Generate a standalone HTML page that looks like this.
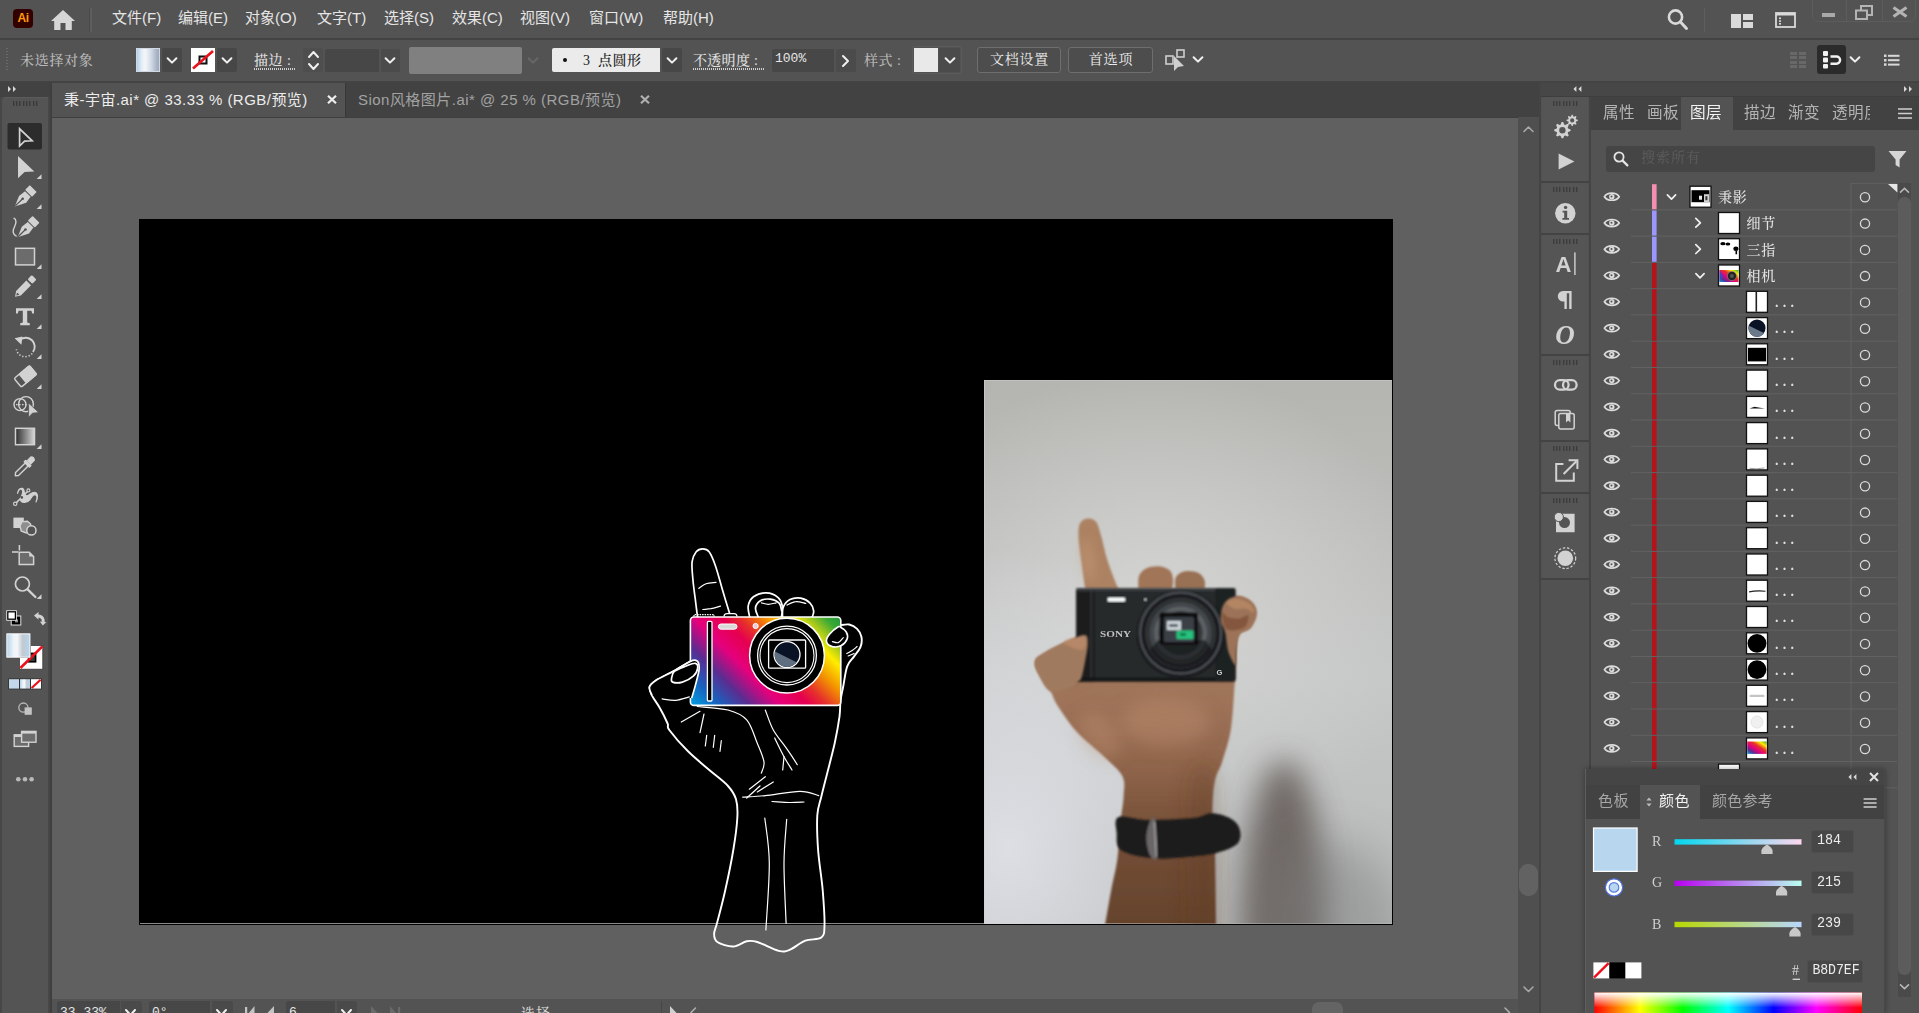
<!DOCTYPE html>
<html lang="zh-CN">
<head>
<meta charset="utf-8">
<title>Adobe Illustrator</title>
<style>
*{box-sizing:border-box;margin:0;padding:0}
html,body{width:1919px;height:1013px;overflow:hidden;background:#535353}
body{position:relative;font-family:"Liberation Sans","Noto Sans CJK SC",sans-serif;color:#dcdcdc;font-size:15px}
.abs{position:absolute}
.sans{font-family:"Liberation Sans","Noto Sans CJK SC",sans-serif}
.serif{font-family:"Liberation Serif","Noto Serif CJK SC",serif}
svg{display:block;overflow:visible}
/* ---------- menu bar ---------- */
#menubar{left:0;top:0;width:1919px;height:38px;background:#535353}
.mi{position:absolute;top:7px;height:22px;line-height:22px;font-size:15px;color:#e6e6e6;white-space:nowrap}
#line1{left:0;top:38px;width:1919px;height:2px;background:#434343}
/* ---------- control bar ---------- */
#ctrlbar{left:0;top:40px;width:1919px;height:41px;background:#535353}
#line2{left:0;top:81px;width:1919px;height:2px;background:#434343}
.ctl{position:absolute;font-weight:500;font-size:14px;color:#d2d2d2;white-space:nowrap;line-height:20px;top:51px}
.dd{position:absolute;background:#474747;border-radius:2px}
.chev{position:absolute}
/* ---------- tab bar ---------- */
#tabbar{left:52px;top:83px;width:1487px;height:34px;background:#424242}
#tab1{left:52px;top:83px;width:293px;height:34px;background:#535353}
.tabtxt{position:absolute;top:89px;font-size:15px;line-height:22px;white-space:nowrap;letter-spacing:0.47px}
/* ---------- tools ---------- */
#toolstrip{left:0;top:83px;width:50px;height:14px;background:#424242}
#tools{left:2px;top:97px;width:46px;height:916px;background:#545454;border-radius:4px 0 0 0;border-top:1px solid #5b5b5b}
#toolsep{left:50px;top:83px;width:2px;height:930px;background:#3f3f3f}
.tool{position:absolute;left:8px;width:34px;height:27px}
/* ---------- canvas ---------- */
#canvas{left:52px;top:118px;width:1468px;height:881px;border-top:0;background:#606060;overflow:hidden}
#artboard{left:139px;top:219px;width:1254px;height:706px;background:#000}
</style>
</head>
<body>
<!-- ================= MENU BAR ================= -->
<div id="menubar" class="abs"></div>
<div id="line1" class="abs"></div>
<div id="ctrlbar" class="abs"></div>
<div id="line2" class="abs"></div>
<div id="tabbar" class="abs"></div>
<div id="tab1" class="abs"></div>
<div class="abs" style="left:0;top:83px;width:50px;height:930px;background:#474747"></div>
<div id="toolstrip" class="abs"></div>
<div id="tools" class="abs"></div>
<div id="toolsep" class="abs"></div>
<div id="canvas" class="abs"></div>
<div class="abs" style="left:52px;top:117px;width:1487px;height:1px;background:#3e3e3e"></div>
<div id="artboard" class="abs"></div>
<!-- Ai logo -->
<div class="abs" style="left:13px;top:9px;width:20px;height:19px;background:#330000;border-radius:4px"></div>
<div class="abs sans" style="left:13px;top:9px;width:20px;height:19px;line-height:19px;text-align:center;font-size:12px;font-weight:bold;color:#ff9a00;letter-spacing:-0.5px">Ai</div>
<!-- home -->
<svg class="abs" style="left:51px;top:10px" width="24" height="20" viewBox="0 0 24 20"><path d="M12 0 L0 11 L3.2 11 L3.2 20 L9.5 20 L9.5 13 L14.5 13 L14.5 20 L20.8 20 L20.8 11 L24 11 Z" fill="#d6d6d6"/></svg>
<div class="abs" style="left:90px;top:8px;width:2px;height:24px;background:#5d5d5d"></div>
<div class="abs" style="left:89px;top:8px;width:1px;height:24px;background:#4a4a4a"></div>
<div id="menuitems">
<span class="mi abs" style="left:112px">文件(F)</span>
<span class="mi abs" style="left:178px">编辑(E)</span>
<span class="mi abs" style="left:245px">对象(O)</span>
<span class="mi abs" style="left:317px">文字(T)</span>
<span class="mi abs" style="left:384px">选择(S)</span>
<span class="mi abs" style="left:452px">效果(C)</span>
<span class="mi abs" style="left:520px">视图(V)</span>
<span class="mi abs" style="left:589px">窗口(W)</span>
<span class="mi abs" style="left:663px">帮助(H)</span>
</div>
<svg class="abs" style="left:1664px;top:6px" width="28" height="28" viewBox="0 0 28 28"><circle cx="11.5" cy="11" r="6.6" fill="none" stroke="#d9d9d9" stroke-width="2.6"/><line x1="16.5" y1="16" x2="22.5" y2="22.5" stroke="#d9d9d9" stroke-width="3" stroke-linecap="round"/></svg>
<div class="abs" style="left:1704px;top:8px;width:1px;height:24px;background:#5e5e5e"></div>
<svg class="abs" style="left:1731px;top:14px" width="22" height="14" viewBox="0 0 22 14"><g fill="#d9d9d9"><rect x="0" y="0" width="10" height="14"/><rect x="12" y="0" width="10" height="6"/><rect x="12" y="8" width="10" height="6"/></g></svg>
<svg class="abs" style="left:1775px;top:12px" width="21" height="16" viewBox="0 0 21 16"><rect x="1" y="1" width="19" height="14" fill="none" stroke="#d9d9d9" stroke-width="1.8"/><rect x="1" y="1" width="19" height="2.5" fill="#d9d9d9"/><g fill="#d9d9d9"><rect x="4" y="5.5" width="2" height="1.6"/><rect x="4" y="8.3" width="2" height="1.6"/><rect x="4" y="11" width="2" height="1.6"/></g></svg>
<div class="abs" style="left:1812px;top:-6px;width:104px;height:28px;border:1px solid #5c5c5c;border-radius:6px"></div>
<div class="abs" style="left:1846px;top:0;width:1px;height:21px;background:#5c5c5c"></div>
<div class="abs" style="left:1882px;top:0;width:1px;height:21px;background:#5c5c5c"></div>
<div class="abs" style="left:1822px;top:13px;width:13px;height:4px;background:#a8a8a8"></div>
<svg class="abs" style="left:1855px;top:5px" width="18" height="15" viewBox="0 0 18 15"><rect x="6" y="1" width="11" height="9" fill="none" stroke="#b4b4b4" stroke-width="2"/><rect x="1" y="5.5" width="11" height="8.5" fill="#535353" stroke="#b4b4b4" stroke-width="2"/></svg>
<svg class="abs" style="left:1892px;top:7px" width="16" height="10" viewBox="0 0 16 10"><path d="M1.5 0.5 L14.5 9.5 M14.5 0.5 L1.5 9.5" stroke="#b4b4b4" stroke-width="3"/></svg>
<!--MENU-->
<div class="abs" style="left:6px;top:48px;width:2px;height:24px;background:repeating-linear-gradient(to bottom,#6a6a6a 0 1px,transparent 1px 3px)"></div>
<div class="ctl serif" style="left:20px;color:#b9b9b9;letter-spacing:0.7px">未选择对象</div>
<div class="abs" style="left:136px;top:48px;width:24px;height:24px;background:linear-gradient(90deg,#b4d2ea 0%,#e4eef7 22%,#f4f7fa 38%,#d5dde8 62%,#aab6c8 88%,#9eaabd 100%);border:1px solid #cfd8e0"></div>
<div class="dd" style="left:162px;top:48px;width:20px;height:24px"></div>
<svg class="abs" style="left:166.0px;top:57.0px" width="12" height="7" viewBox="-1 -1 12 7"><path d="M0.6 0.2 L5 4.6 L9.4 0.2" fill="none" stroke="#f0f0f0" stroke-width="2" stroke-linecap="round" stroke-linejoin="round"/></svg>
<div class="abs" style="left:191px;top:48px;width:24px;height:24px;background:#fff"></div>
<svg class="abs" style="left:191px;top:48px" width="24" height="24" viewBox="0 0 24 24"><rect x="8.5" y="8.5" width="7" height="7" fill="none" stroke="#111" stroke-width="2"/><line x1="2" y1="20.5" x2="22" y2="3" stroke="#e8111c" stroke-width="2.6"/></svg>
<div class="dd" style="left:217px;top:48px;width:20px;height:24px"></div>
<svg class="abs" style="left:221.0px;top:57.0px" width="12" height="7" viewBox="-1 -1 12 7"><path d="M0.6 0.2 L5 4.6 L9.4 0.2" fill="none" stroke="#f0f0f0" stroke-width="2" stroke-linecap="round" stroke-linejoin="round"/></svg>
<div class="ctl serif" style="left:254px;color:#e0e0e0;letter-spacing:0.5px">描边 :</div>
<div class="abs" style="left:254px;top:68px;width:42px;height:2px;background:repeating-linear-gradient(90deg,#d0d0d0 0 1px,transparent 1px 2px)"></div>
<div class="dd" style="left:303px;top:48px;width:20px;height:24px;background:#4e4e4e"></div>
<svg class="abs" style="left:307.5px;top:51.0px" width="11" height="7" viewBox="-1 -1 11 7"><path d="M0 5 L4.5 0 L9 5" fill="none" stroke="#f0f0f0" stroke-width="2" stroke-linecap="round" stroke-linejoin="round"/></svg>
<svg class="abs" style="left:307.5px;top:62.5px" width="11" height="7" viewBox="-1 -1 11 7"><path d="M0 0 L4.5 5 L9 0" fill="none" stroke="#f0f0f0" stroke-width="2" stroke-linecap="round" stroke-linejoin="round"/></svg>
<div class="dd" style="left:325px;top:49px;width:54px;height:23px;background:#474747;border-radius:2px 0 0 2px"></div>
<div class="dd" style="left:381px;top:49px;width:19px;height:23px;background:#4b4b4b"></div>
<svg class="abs" style="left:384.0px;top:57.0px" width="12" height="7" viewBox="-1 -1 12 7"><path d="M0.6 0.2 L5 4.6 L9.4 0.2" fill="none" stroke="#f0f0f0" stroke-width="2" stroke-linecap="round" stroke-linejoin="round"/></svg>
<div class="abs" style="left:409px;top:47px;width:113px;height:27px;background:#808080;border-radius:2px"></div>
<svg class="abs" style="left:527.0px;top:57.0px" width="12" height="7" viewBox="-1 -1 12 7"><path d="M0.6 0.2 L5 4.6 L9.4 0.2" fill="none" stroke="#676767" stroke-width="2" stroke-linecap="round" stroke-linejoin="round"/></svg>
<div class="abs" style="left:552px;top:48px;width:108px;height:24px;background:#ebebeb;border-radius:2px 0 0 2px"></div>
<div class="abs" style="left:563px;top:58px;width:4px;height:4px;border-radius:50%;background:#111"></div>
<div class="ctl serif" style="left:583px;color:#1e1e1e">3</div>
<div class="ctl serif" style="left:598px;color:#1e1e1e;letter-spacing:0.5px">点圆形</div>
<div class="dd" style="left:662px;top:48px;width:20px;height:24px"></div>
<svg class="abs" style="left:666.0px;top:57.0px" width="12" height="7" viewBox="-1 -1 12 7"><path d="M0.6 0.2 L5 4.6 L9.4 0.2" fill="none" stroke="#f0f0f0" stroke-width="2" stroke-linecap="round" stroke-linejoin="round"/></svg>
<div class="ctl serif" style="left:693px;color:#e0e0e0;letter-spacing:0.3px">不透明度 :</div>
<div class="abs" style="left:693px;top:68px;width:71px;height:2px;background:repeating-linear-gradient(90deg,#d0d0d0 0 1px,transparent 1px 2px)"></div>
<div class="dd" style="left:772px;top:49px;width:62px;height:23px;border-radius:2px 0 0 2px"></div>
<div class="abs" style="left:775px;top:50px;font-family:'Liberation Mono',monospace;font-size:13px;line-height:18px;color:#e8e8e8">100%</div>
<div class="dd" style="left:836px;top:49px;width:20px;height:23px;background:#4b4b4b"></div>
<svg class="abs" style="left:842.0px;top:54.5px" width="7" height="12" viewBox="-1 -1 7 12"><path d="M0 0 L5 5.0 L0 10" fill="none" stroke="#f0f0f0" stroke-width="2" stroke-linecap="round" stroke-linejoin="round"/></svg>
<div class="ctl serif" style="left:864px;color:#b9b9b9;letter-spacing:0.5px">样式 :</div>
<div class="abs" style="left:912px;top:46px;width:50px;height:28px;border:1px solid #5b5b5b;border-radius:2px"></div>
<div class="abs" style="left:914px;top:48px;width:24px;height:24px;background:#e9e9e9"></div>
<div class="dd" style="left:939px;top:48px;width:21px;height:24px;background:#4b4b4b"></div>
<svg class="abs" style="left:943.5px;top:57.0px" width="12" height="7" viewBox="-1 -1 12 7"><path d="M0.6 0.2 L5 4.6 L9.4 0.2" fill="none" stroke="#f0f0f0" stroke-width="2" stroke-linecap="round" stroke-linejoin="round"/></svg>
<div class="abs serif" style="left:977px;top:47px;width:84px;height:26px;border:1px solid #6e6e6e;border-radius:3px;background:#4d4d4d;color:#ececec;font-size:14px;line-height:24px;text-align:center;letter-spacing:0.8px;padding-left:1px">文档设置</div>
<div class="abs serif" style="left:1068px;top:47px;width:85px;height:26px;border:1px solid #6e6e6e;border-radius:3px;background:#4d4d4d;color:#ececec;font-size:14px;line-height:24px;text-align:center;letter-spacing:0.8px;padding-left:1px">首选项</div>
<svg class="abs" style="left:1165px;top:49px" width="22" height="24" viewBox="0 0 22 24"><rect x="1" y="7" width="7" height="8" fill="none" stroke="#cfcfcf" stroke-width="1.6"/><rect x="12" y="1" width="7" height="7" fill="none" stroke="#cfcfcf" stroke-width="1.6"/><path d="M9 7 L9 22 L13 18 L19 17 Z" fill="#cfcfcf"/></svg>
<svg class="abs" style="left:1192.0px;top:56.0px" width="12" height="7" viewBox="-1 -1 12 7"><path d="M0.6 0.2 L5 4.6 L9.4 0.2" fill="none" stroke="#f0f0f0" stroke-width="2" stroke-linecap="round" stroke-linejoin="round"/></svg>
<svg class="abs" style="left:1790px;top:52px" width="16" height="16" viewBox="0 0 16 16"><g fill="#686868"><rect x="0" y="0" width="7" height="3"/><rect x="0" y="4" width="7" height="3"/><rect x="9" y="0" width="7" height="3"/><rect x="9" y="4" width="7" height="3"/><rect x="0" y="9" width="7" height="3"/><rect x="0" y="13" width="7" height="3"/><rect x="9" y="9" width="7" height="3"/><rect x="9" y="13" width="7" height="3"/></g></svg>
<div class="abs" style="left:1817px;top:45px;width:29px;height:29px;background:#2b2b2b;border-radius:3px"></div>
<svg class="abs" style="left:1817px;top:45px" width="29" height="29" viewBox="0 0 29 29"><g fill="#f2f2f2"><rect x="6" y="6" width="5" height="5" rx="1"/><rect x="6" y="12.5" width="5" height="5" rx="1"/><rect x="6" y="19" width="5" height="4.5" rx="1"/></g><path d="M13.5 11.5 H19.5 A3.6 3.6 0 0 1 19.5 18.7 H13.5" fill="none" stroke="#f2f2f2" stroke-width="2.4"/></svg>
<svg class="abs" style="left:1848.5px;top:56.0px" width="12" height="7" viewBox="-1 -1 12 7"><path d="M0.6 0.2 L5 4.6 L9.4 0.2" fill="none" stroke="#f0f0f0" stroke-width="2" stroke-linecap="round" stroke-linejoin="round"/></svg>
<svg class="abs" style="left:1884px;top:54px" width="16" height="12" viewBox="0 0 16 12"><g fill="#d8d8d8"><rect x="0" y="0.5" width="2.5" height="2.5"/><rect x="4" y="0.8" width="11.5" height="2"/><rect x="0" y="5" width="2.5" height="2.5"/><rect x="4" y="5.2" width="11.5" height="2"/><rect x="0" y="9.3" width="2.5" height="2.5"/><rect x="4" y="9.6" width="11.5" height="2"/></g></svg>
<!--CTRL-->
<div class="tabtxt sans" style="left:64px;color:#ededed">秉-宇宙.ai* @ 33.33 % (RGB/预览)</div>
<svg class="abs" style="left:327px;top:95px" width="10" height="9" viewBox="0 0 10 9"><path d="M1 0.8 L9 8.2 M9 0.8 L1 8.2" stroke="#f0f0f0" stroke-width="2.2"/></svg>
<div class="abs" style="left:345px;top:83px;width:1px;height:34px;background:#383838"></div>
<div class="tabtxt sans" style="left:358px;color:#a2a2a2">Sion风格图片.ai* @ 25 % (RGB/预览)</div>
<svg class="abs" style="left:640px;top:95px" width="10" height="9" viewBox="0 0 10 9"><path d="M1 0.8 L9 8.2 M9 0.8 L1 8.2" stroke="#b0b0b0" stroke-width="2.2"/></svg>
<!--TABS-->
<svg class="abs" style="left:0;top:0" width="52" height="1013" viewBox="0 0 52 1013">
<path d="M8 86 L11 89 L8 92 Z M13 86 L16 89 L13 92 Z" fill="#d8d8d8"/>
<g fill="#3a3a3a"><rect x="13" y="101" width="1.4" height="5"/><rect x="16" y="101" width="1.4" height="5"/><rect x="19" y="101" width="1.4" height="5"/><rect x="23" y="101" width="1.4" height="5"/><rect x="26" y="101" width="1.4" height="5"/><rect x="29" y="101" width="1.4" height="5"/><rect x="33" y="101" width="1.4" height="5"/><rect x="36" y="101" width="1.4" height="5"/></g>
<rect x="7.5" y="123" width="34.5" height="26.5" rx="2" fill="#2c2c2c"/>
<path d="M19.6 128.8 L19.6 146 L24.6 141.2 L32.2 140.8 Z" fill="none" stroke="#d2d2d2" stroke-width="1.7" stroke-linejoin="miter"/>
<path d="M18 156 L18 178.3 L24.6 172 L34.3 171.6 Z" fill="#d2d2d2"/>
<path d="M41.5 174.2 L41.5 179.0 L36.7 179.0 Z" fill="#d2d2d2"/><g transform="translate(14.8,206.4)"><path d="M0 0 L4.2 -10.5 L10.2 -15.2 L15.8 -9.6 L11.4 -3.6 Z" fill="#d2d2d2"/><path d="M0.5 -0.5 L7.6 -7.4" stroke="#535353" stroke-width="1.2"/><circle cx="7.9" cy="-7.7" r="1.3" fill="#535353"/><path d="M11.4 -16.6 L15 -20.2 L20.8 -14.4 L17.2 -10.8 Z" fill="#d2d2d2" stroke="#d2d2d2" stroke-width="1.6" stroke-linejoin="round"/></g><path d="M41.5 204.2 L41.5 209.0 L36.7 209.0 Z" fill="#d2d2d2"/>
<g transform="translate(17.6,237.2)"><path d="M0 0 L4.2 -10.5 L10.2 -15.2 L15.8 -9.6 L11.4 -3.6 Z" fill="#d2d2d2"/><path d="M0.5 -0.5 L7.6 -7.4" stroke="#535353" stroke-width="1.2"/><circle cx="7.9" cy="-7.7" r="1.3" fill="#535353"/><path d="M11.4 -16.6 L15 -20.2 L20.8 -14.4 L17.2 -10.8 Z" fill="#d2d2d2" stroke="#d2d2d2" stroke-width="1.6" stroke-linejoin="round"/></g><path d="M13.6 217.8 C17 219.5 16.2 223.5 14.4 227 C12.6 230.6 12.4 234.6 16.6 236.4" fill="none" stroke="#d2d2d2" stroke-width="1.4"/>
<rect x="15.5" y="248.3" width="19" height="16.6" fill="#6c6c6c" stroke="#d2d2d2" stroke-width="1.5"/><path d="M41.5 264.2 L41.5 269.0 L36.7 269.0 Z" fill="#d2d2d2"/>
<g transform="translate(15,296.8) rotate(-45.5)"><path d="M0 0 L5 -3.3 L19.5 -3.3 L19.5 3.3 L5 3.3 Z" fill="#d2d2d2"/><path d="M1.8 0 L4.6 -1.6 L4.6 1.6 Z" fill="#535353"/><rect x="21.3" y="-3.3" width="6" height="6.6" rx="1.2" fill="#d2d2d2"/></g><path d="M41.5 294.2 L41.5 299.0 L36.7 299.0 Z" fill="#d2d2d2"/>
<path d="M16 308.2 H34 V313.6 H32.2 L31.4 310.8 H27.2 V322.6 L29.8 323.2 V325.2 H20.2 V323.2 L22.8 322.6 V310.8 H18.6 L17.8 313.6 H16 Z" fill="#d2d2d2"/><path d="M41.5 324.2 L41.5 329.0 L36.7 329.0 Z" fill="#d2d2d2"/>
<path d="M20.2 339.6 A9 9 0 0 1 33 352" fill="none" stroke="#d2d2d2" stroke-width="1.9"/><path d="M14.6 338.2 L22.4 336.6 L21.4 344.8 Z" fill="#d2d2d2"/><path d="M32.2 353.4 A9 9 0 0 1 16.4 349.4" fill="none" stroke="#d2d2d2" stroke-width="1.6" stroke-dasharray="1.3 1.9"/><path d="M41.5 354.2 L41.5 359.0 L36.7 359.0 Z" fill="#d2d2d2"/>
<g transform="translate(25.4,376.4) rotate(-40)"><rect x="-10" y="-5.6" width="20" height="11.2" rx="1.5" fill="none" stroke="#d2d2d2" stroke-width="1.4"/><rect x="-4" y="-6.3" width="14.7" height="12.6" rx="1.5" fill="#d2d2d2"/></g><path d="M41.5 384.2 L41.5 389.0 L36.7 389.0 Z" fill="#d2d2d2"/>
<circle cx="20" cy="404.6" r="6" fill="none" stroke="#d2d2d2" stroke-width="1.4"/><ellipse cx="26" cy="404.2" rx="7.4" ry="7.6" fill="none" stroke="#d2d2d2" stroke-width="1.4"/><path d="M16 404.6 H29" stroke="#d2d2d2" stroke-width="1.2" stroke-dasharray="1.6 1.4"/><path d="M28.6 403 L28.6 417.4 L32.4 413.2 L38.8 412.6 Z" fill="#d2d2d2" stroke="#535353" stroke-width="0.8"/>
<defs><linearGradient id="gt" x1="0" x2="1"><stop offset="0" stop-color="#2e2e2e"/><stop offset="1" stop-color="#d6d6d6"/></linearGradient></defs><rect x="15.5" y="428.3" width="19" height="16.4" fill="url(#gt)" stroke="#d2d2d2" stroke-width="1.5"/><path d="M41.5 444.2 L41.5 449.0 L36.7 449.0 Z" fill="#d2d2d2"/>
<g transform="translate(14.6,476.4) rotate(-44.5)"><path d="M1 0 L3.4 -2.1 L17 -2.1 L17 2.1 L3.4 2.1 Z" fill="none" stroke="#d2d2d2" stroke-width="1.4" stroke-linejoin="round"/><rect x="16.4" y="-4.4" width="3.4" height="8.8" rx="0.8" fill="#d2d2d2"/><path d="M19.8 -3 L25.6 -3 Q28.6 0 25.6 3 L19.8 3 Z" fill="#d2d2d2"/></g>
<path d="M17.6 493.4 C18.4 489.2 21.4 487.6 22.6 490.6 C23.6 494 20 497.4 20.6 500.2 C21.4 503.4 27.6 503 30 499.6 C32 496.6 33.6 493.2 36.2 495.2 C38 497 36.6 500 36 502 C37.6 498.6 38 494.6 36 492.8 C33 490.6 30 494.6 27.6 495.6 C24.6 496.6 24.6 492.6 23.8 490 C22.6 486.6 18.2 488.4 17.6 493.4 Z" fill="#d2d2d2" stroke="#d2d2d2" stroke-width="1.2" stroke-linejoin="round"/><path d="M15.4 503.6 L28 491" stroke="#d2d2d2" stroke-width="1.5"/><circle cx="15.2" cy="503.8" r="1.7" fill="#535353" stroke="#d2d2d2" stroke-width="1.1"/><circle cx="28.4" cy="490.4" r="1.5" fill="#535353" stroke="#d2d2d2" stroke-width="1.1"/><circle cx="21.8" cy="497.4" r="1.3" fill="#535353"/>
<rect x="13.4" y="517.6" width="10.4" height="10.4" fill="#d2d2d2"/><path d="M22 521.6 L27.4 521.2 L30.6 524 L30.4 530 L26 533 L21.2 531 L20 526 Z" fill="#8e8e8e" stroke="#d2d2d2" stroke-width="1.4"/><circle cx="31.4" cy="530.4" r="4.6" fill="#535353" stroke="#d2d2d2" stroke-width="1.5"/>
<path d="M12 552 H18.4 M19.4 545 V550.6" stroke="#d2d2d2" stroke-width="1.5"/><path d="M19.2 552.2 H29.2 L33.6 556.6 V564.6 H19.2 Z" fill="#6c6c6c" stroke="#d2d2d2" stroke-width="1.5"/><path d="M29.2 552.2 V556.6 H33.6 Z" fill="#d2d2d2"/>
<circle cx="22.4" cy="584" r="7" fill="none" stroke="#d2d2d2" stroke-width="1.7"/><path d="M27.6 589.4 L35.4 597" stroke="#d2d2d2" stroke-width="2.4" stroke-linecap="round"/><path d="M41.5 594.2 L41.5 599.0 L36.7 599.0 Z" fill="#d2d2d2"/>
<rect x="11.2" y="616" width="9.6" height="9" fill="#000" stroke="#e0e0e0" stroke-width="1"/><rect x="15" y="619.4" width="3" height="3" fill="#8a8a8a"/><rect x="6.8" y="610.8" width="9.6" height="9.4" fill="#fff" stroke="#e0e0e0" stroke-width="1"/><rect x="7.8" y="611.8" width="7.6" height="7.4" fill="#fff" stroke="#000" stroke-width="1.3"/>
<path d="M34 615.6 L38.6 612 L38.4 614.6 C43 615 45.2 618.6 44.6 622 L46.4 622 L42.8 625.6 L39.8 621.6 L41.8 621.8 C42 619.4 40.8 617.8 38.4 617.6 L38.6 619.8 Z" fill="#d2d2d2"/>
<rect x="19.4" y="645.4" width="23.4" height="23.8" fill="#fff" stroke="#3a3a3a" stroke-width="0.8"/><rect x="28.6" y="653.4" width="7" height="8.4" fill="#3a3a3a" stroke="#000" stroke-width="1.6"/><path d="M20.4 668 L42.4 646.4" stroke="#ee0f1b" stroke-width="2.6"/>
<defs><linearGradient id="gf" x1="0" x2="1"><stop offset="0" stop-color="#b4d2e8"/><stop offset="0.3" stop-color="#eef4f9"/><stop offset="0.45" stop-color="#f4f7fa"/><stop offset="0.68" stop-color="#c1c9d1"/><stop offset="1" stop-color="#b5d5ec"/></linearGradient></defs><rect x="6" y="633" width="24.8" height="25" fill="#2a2a2a"/><rect x="6.8" y="633.8" width="23.2" height="23.4" fill="url(#gf)" stroke="#fff" stroke-width="1"/>
<rect x="8.2" y="678.4" width="33.6" height="11" fill="#333"/><rect x="9" y="679.2" width="10" height="9.4" fill="#c3d8ea"/><rect x="20" y="679.2" width="10" height="9.4" fill="url(#gf)"/><rect x="31" y="679.2" width="10" height="9.4" fill="#fff"/><path d="M31.6 688 L40.6 679.8" stroke="#ee0f1b" stroke-width="2.2"/>
<circle cx="23.4" cy="707.6" r="4.6" fill="none" stroke="#b8b8b8" stroke-width="1.3"/><rect x="24.6" y="707.4" width="7.2" height="7.4" fill="#c4c4c4"/>
<rect x="14.2" y="734.8" width="14.4" height="11.6" fill="#6c6c6c" stroke="#d2d2d2" stroke-width="1.4"/><rect x="14.2" y="734.8" width="14.4" height="2.2" fill="#d2d2d2"/><rect x="21.6" y="731.4" width="14.4" height="10.8" fill="#6c6c6c" stroke="#d2d2d2" stroke-width="1.4"/><rect x="21.6" y="731.4" width="14.4" height="2.2" fill="#d2d2d2"/>
<circle cx="18.3" cy="779.2" r="2.3" fill="#b9b9b9"/><circle cx="25" cy="779.2" r="2.3" fill="#b9b9b9"/><circle cx="31.6" cy="779.2" r="2.3" fill="#b9b9b9"/>
</svg>
<!--TOOLS-->
<div class="abs" style="left:140px;top:923px;width:844px;height:1px;background:#8a8a8a"></div>
<!--ARTSTART--><svg class="abs" style="left:0;top:0" width="1919" height="1013" viewBox="0 0 1919 1013">
<path d="M699.2 666.3 C698.7 665.4 697.7 661.6 696.2 660.8 C694.8 660.0 694.1 659.6 690.3 661.4 C686.5 663.1 679.3 668.1 673.6 671.2 C667.8 674.4 659.8 677.9 655.8 680.5 C651.8 683.1 650.1 684.5 649.5 687.0 C648.9 689.6 650.5 692.5 652.2 695.9 C653.9 699.4 657.2 703.1 659.7 707.8 C662.3 712.4 666.0 719.8 667.6 723.5 C669.2 727.2 665.9 725.4 669.3 730.0 C672.7 734.6 681.3 744.7 688.0 751.3 C694.7 758.0 702.7 764.2 709.3 770.0 C716.0 775.8 723.6 781.1 728.0 786.0 C732.4 790.9 734.4 794.0 736.0 799.3 C737.6 804.7 737.8 809.6 737.3 818.0 C736.9 826.4 735.3 838.0 733.3 850.0 C731.3 862.0 728.0 878.0 725.3 890.0 C722.7 902.0 719.2 914.7 717.3 922.0 C715.5 929.3 714.1 930.7 714.1 934.0 C714.1 937.3 714.1 939.9 717.3 942.0 C720.5 944.1 728.4 946.7 733.3 946.5 C738.2 946.4 742.7 942.0 746.7 941.2 C750.7 940.4 752.0 940.4 757.3 942.0 C762.7 943.6 773.3 949.5 778.7 950.8 C784.0 952.1 784.9 951.7 789.3 950.0 C793.8 948.3 800.0 942.8 805.3 940.7 C810.7 938.6 818.1 940.1 821.3 937.5 C824.5 934.8 824.3 932.6 824.5 924.7 C824.8 916.8 823.7 902.4 822.7 890.0 C821.6 877.6 819.0 862.4 818.1 850.0 C817.2 837.6 816.8 824.2 817.3 815.3 C817.9 806.4 819.8 803.3 821.3 796.7 C822.9 790.0 824.4 784.2 826.7 775.3 C828.9 766.4 832.5 753.1 834.7 743.3 C836.8 733.6 838.5 723.8 839.5 716.7 C840.4 709.6 839.9 705.8 840.5 700.7 C841.2 695.6 842.2 691.8 843.3 686.0 C844.4 680.3 845.4 671.2 847.2 666.3 C849.0 661.4 851.9 659.7 854.1 656.4 C856.4 653.2 859.4 649.9 860.6 646.6 C861.9 643.3 862.0 639.7 861.4 636.7 C860.8 633.7 859.1 630.8 857.1 628.8 C855.1 626.8 852.0 625.1 849.2 624.5 C846.4 623.9 841.8 625.1 840.3 625.3" fill="none" stroke="#fff" stroke-width="1.9" stroke-linejoin="round"/>
<path d="M697.6 617.4 C697.2 614.3 696.0 605.5 695.3 599.2 C694.5 592.9 693.4 585.7 692.9 579.5 C692.4 573.2 691.5 566.3 692.1 561.7 C692.7 557.1 694.5 554.0 696.2 551.8 C698.0 549.7 700.6 548.9 702.8 548.9 C704.9 548.9 707.0 549.0 709.1 551.8 C711.2 554.6 713.1 559.1 715.4 565.7 C717.7 572.2 720.4 582.9 722.9 591.3 C725.4 599.7 729.1 611.9 730.4 616.0" fill="#000" stroke="#fff" stroke-width="1.7" stroke-linejoin="round"/>
<path d="M698.8 588.4 C700.0 587.6 703.3 584.8 706.1 583.8 C709.0 582.8 714.3 582.7 716.0 582.4" fill="none" stroke="#fff" stroke-width="1.2" stroke-linecap="round" stroke-linejoin="round"/>
<path d="M702.8 609.5 C704.1 609.3 708.1 609.2 711.0 608.7 C714.0 608.1 718.9 606.5 720.5 606.1" fill="none" stroke="#fff" stroke-width="1.2" stroke-linecap="round" stroke-linejoin="round"/>
<path d="M749.7 617.4 C749.5 615.5 747.5 609.5 748.2 606.1 C748.8 602.7 750.5 599.0 753.5 596.8 C756.5 594.6 762.2 592.8 766.3 592.9 C770.4 593.0 775.5 595.3 778.1 597.6 C780.8 600.0 782.0 603.8 782.5 607.1 C783.0 610.4 781.5 615.7 781.3 617.4" fill="#000" stroke="#fff" stroke-width="1.7" stroke-linejoin="round"/>
<path d="M758.4 617.4 C757.9 615.8 755.1 610.9 755.5 608.1 C755.8 605.3 757.9 602.3 760.4 600.8 C762.9 599.3 767.1 598.8 770.3 599.2 C773.4 599.6 777.2 601.2 779.1 603.2 C781.0 605.1 781.3 609.7 781.7 611.0" fill="none" stroke="#fff" stroke-width="1.7" stroke-linecap="round" stroke-linejoin="round"/>
<path d="M761.4 602.8 C762.5 603.0 765.8 604.3 768.3 604.3 C770.7 604.3 774.9 603.0 776.2 602.8" fill="none" stroke="#fff" stroke-width="1.2" stroke-linecap="round" stroke-linejoin="round"/>
<path d="M782.5 617.4 C782.6 615.7 782.0 610.1 783.3 607.1 C784.5 604.1 787.1 601.1 790.0 599.6 C792.9 598.1 797.5 597.6 800.8 598.2 C804.2 598.8 808.0 601.0 810.1 603.2 C812.3 605.3 813.3 608.7 813.7 611.0 C814.0 613.4 812.4 616.3 812.1 617.4" fill="#000" stroke="#fff" stroke-width="1.7" stroke-linejoin="round"/>
<path d="M787.0 605.1 C788.5 604.5 792.8 601.8 795.9 601.6 C799.0 601.3 804.1 603.2 805.8 603.5" fill="none" stroke="#fff" stroke-width="1.2" stroke-linecap="round" stroke-linejoin="round"/>
<defs>
<linearGradient id="rb" gradientUnits="userSpaceOnUse" x1="705.8" y1="721" x2="825.4" y2="601.4">
<stop offset="0" stop-color="#00a5e3"/><stop offset="0.12" stop-color="#1565c0"/><stop offset="0.25" stop-color="#5a2d91"/>
<stop offset="0.38" stop-color="#e5007d"/><stop offset="0.50" stop-color="#e6004f"/><stop offset="0.58" stop-color="#e6332a"/><stop offset="0.68" stop-color="#f39200"/>
<stop offset="0.79" stop-color="#ffed00"/><stop offset="0.86" stop-color="#a4c81e"/><stop offset="0.93" stop-color="#3aaa35"/><stop offset="1" stop-color="#22963a"/>
</linearGradient>
<clipPath id="lensclip"><circle cx="787" cy="654.6" r="12.4"/></clipPath>
</defs>
<!-- top buttons -->
<path d="M694 616.5 V614.6 H714 V616.5" fill="none" stroke="#fff" stroke-width="1.2" stroke-dasharray="1.5 1"/>
<path d="M724 616.5 Q724 613.6 727 613.6 H734 Q737 613.6 737 616.5" fill="#000" stroke="#fff" stroke-width="1.2"/>
<rect x="690.4" y="617" width="150.4" height="88.4" rx="3.5" fill="url(#rb)" stroke="#fff" stroke-width="1.6"/>
<rect x="707.4" y="621.4" width="4.6" height="79.6" rx="1" fill="#000" stroke="#fff" stroke-width="1.3"/>
<rect x="718.4" y="624" width="18.6" height="5.2" rx="2.6" fill="#d9d9d9" stroke="#fff" stroke-width="1"/>
<circle cx="755.6" cy="626" r="2.6" fill="#f3c6d8" stroke="#fff" stroke-width="1"/>
<circle cx="787" cy="655.6" r="37.4" fill="#000" stroke="#fff" stroke-width="1.5"/>
<circle cx="787" cy="655.6" r="29.4" fill="none" stroke="#fff" stroke-width="1.3"/>
<circle cx="787" cy="655.6" r="27" fill="none" stroke="#fff" stroke-width="1.1"/>
<rect x="768.6" y="640" width="37" height="28.2" rx="1" fill="#000" stroke="#fff" stroke-width="1.3"/>
<circle cx="787" cy="654.6" r="13" fill="#0a1226" stroke="#fff" stroke-width="1.3"/>
<path d="M774 651 L800 664 L800 670 L774 670 Z" fill="#5f6f80" clip-path="url(#lensclip)"/>
<path d="M838.3 626.8 C836.4 627.9 831.4 631.9 829.5 634.3 C827.5 636.8 826.0 639.6 826.5 641.6 C827.0 643.7 830.0 645.9 832.4 646.6 C834.9 647.2 838.8 646.9 841.3 645.6 C843.8 644.3 846.4 641.0 847.2 638.7 C848.0 636.4 847.2 633.6 846.2 631.8 C845.2 630.0 842.6 628.6 841.3 627.8 C840.0 627.0 840.3 625.8 838.3 626.8 Z" fill="#000" stroke="#fff" stroke-width="1.7" stroke-linejoin="round"/>
<path d="M832.4 641.6 C833.4 641.8 836.5 643.3 838.3 642.6 C840.2 642.0 842.5 638.5 843.3 637.7" fill="none" stroke="#fff" stroke-width="1.2" stroke-linecap="round" stroke-linejoin="round"/>
<path d="M846.8 653.5 C847.7 653.0 850.4 651.7 852.2 650.5 C853.9 649.4 856.3 647.2 857.1 646.6" fill="none" stroke="#fff" stroke-width="1.2" stroke-linecap="round" stroke-linejoin="round"/>
<path d="M848.2 656.0 L854.1 653.5" fill="none" stroke="#fff" stroke-width="1.2" stroke-linecap="round" stroke-linejoin="round"/>
<path d="M691.7 697.9 C692.5 695.3 695.0 687.0 696.2 682.1 C697.5 677.2 699.1 671.8 699.2 668.3 C699.3 664.7 698.3 661.9 696.8 660.8 C695.4 659.6 694.2 659.6 690.3 661.4 C686.4 663.1 679.3 668.1 673.6 671.2 C667.8 674.4 659.8 677.9 655.8 680.5 C651.8 683.1 650.1 684.5 649.5 687.0 C648.9 689.6 651.8 694.4 652.2 695.9" fill="#000" stroke="#fff" stroke-width="1.7" stroke-linejoin="round"/>
<path d="M671.6 678.1 C671.9 676.3 672.2 673.2 674.5 671.2 C676.8 669.3 681.9 667.6 685.4 666.3 C688.8 665.0 693.2 663.0 695.3 663.3 C697.3 663.7 698.0 666.1 697.6 668.3 C697.3 670.4 695.8 673.9 693.3 676.2 C690.8 678.5 685.9 681.1 682.4 682.1 C679.0 683.1 674.4 682.8 672.6 682.1 C670.8 681.4 671.2 680.0 671.6 678.1 Z" fill="none" stroke="#fff" stroke-width="1.7" stroke-linecap="round" stroke-linejoin="round"/>
<path d="M662.1 698.9 C664.3 699.1 671.0 700.6 675.5 700.3 C680.1 699.9 687.0 697.5 689.3 696.9" fill="none" stroke="#fff" stroke-width="1.2" stroke-linecap="round" stroke-linejoin="round"/>
<path d="M697.3 706.5 C702.4 707.1 719.8 707.8 728.0 710.0 C736.2 712.2 741.8 714.3 746.7 719.9 C751.6 725.4 754.4 736.3 757.3 743.3 C760.2 750.4 763.3 757.0 764.0 762.0 C764.7 767.0 761.8 771.3 761.3 773.2" fill="none" stroke="#fff" stroke-width="1.2" stroke-linecap="round" stroke-linejoin="round"/>
<path d="M765.3 710.0 C766.7 713.3 769.8 723.6 773.3 730.0 C776.9 736.4 782.7 742.9 786.7 748.7 C790.7 754.4 795.6 762.0 797.3 764.7" fill="none" stroke="#fff" stroke-width="1.2" stroke-linecap="round" stroke-linejoin="round"/>
<path d="M774.7 738.0 C776.2 741.1 781.1 751.3 784.0 756.7 C786.9 762.0 790.7 767.8 792.0 770.0" fill="none" stroke="#fff" stroke-width="1.2" stroke-linecap="round" stroke-linejoin="round"/>
<path d="M784.0 756.7 L782.7 770.0" fill="none" stroke="#fff" stroke-width="1.2" stroke-linecap="round" stroke-linejoin="round"/>
<path d="M706.7 735.3 L705.3 746.0" fill="none" stroke="#fff" stroke-width="1.2" stroke-linecap="round" stroke-linejoin="round"/>
<path d="M714.7 735.3 L713.3 747.3" fill="none" stroke="#fff" stroke-width="1.2" stroke-linecap="round" stroke-linejoin="round"/>
<path d="M721.3 740.7 L720.0 751.3" fill="none" stroke="#fff" stroke-width="1.2" stroke-linecap="round" stroke-linejoin="round"/>
<path d="M681.3 722.0 L700.0 711.3" fill="none" stroke="#fff" stroke-width="1.2" stroke-linecap="round" stroke-linejoin="round"/>
<path d="M704.0 714.0 L700.0 732.7" fill="none" stroke="#fff" stroke-width="1.2" stroke-linecap="round" stroke-linejoin="round"/>
<path d="M742.7 797.2 C746.4 796.9 755.8 796.6 765.3 795.6 C774.9 794.6 791.1 791.3 800.0 791.3 C808.9 791.3 815.6 794.9 818.7 795.6" fill="none" stroke="#fff" stroke-width="1.2" stroke-linecap="round" stroke-linejoin="round"/>
<path d="M772.0 801.5 C774.9 801.6 784.0 802.4 789.3 802.5 C794.7 802.6 801.6 802.1 804.0 802.0" fill="none" stroke="#fff" stroke-width="1.2" stroke-linecap="round" stroke-linejoin="round"/>
<path d="M749.3 789.2 L765.3 776.7" fill="none" stroke="#fff" stroke-width="1.2" stroke-linecap="round" stroke-linejoin="round"/>
<path d="M757.3 791.9 L773.3 782.0" fill="none" stroke="#fff" stroke-width="1.2" stroke-linecap="round" stroke-linejoin="round"/>
<path d="M746.7 798.0 L760.0 786.0" fill="none" stroke="#fff" stroke-width="1.2" stroke-linecap="round" stroke-linejoin="round"/>
<path d="M764.8 818.0 C765.6 825.6 769.2 844.7 769.3 863.3 C769.5 882.0 766.4 918.9 765.9 930.0" fill="none" stroke="#fff" stroke-width="1.2" stroke-linecap="round" stroke-linejoin="round"/>
<path d="M786.7 819.3 C786.2 826.7 784.1 846.0 784.0 863.3 C783.9 880.7 785.8 913.3 786.1 923.3" fill="none" stroke="#fff" stroke-width="1.2" stroke-linecap="round" stroke-linejoin="round"/>
</svg>
<!--ARTEND-->
<!--ART-->
<!--PHOTOSTART--><div class="abs" style="left:984px;top:380px;width:408px;height:544px;background:
radial-gradient(ellipse 240px 300px at 6% 86%, rgba(222,224,230,0.95), rgba(222,224,230,0) 100%),
radial-gradient(ellipse 280px 240px at 42% 42%, rgba(214,214,212,0.9), rgba(214,214,212,0) 100%),
linear-gradient(180deg,#b4b4b0 0%,#bcbdba 25%,#c4c7c6 55%,#babcbc 100%)"></div>
<div class="abs" style="left:984px;top:380px;width:408px;height:1px;background:#c8c8c8;opacity:.7"></div>
<div class="abs" style="left:984px;top:380px;width:1px;height:544px;background:#d0d0d0;opacity:.6"></div>
<svg class="abs" style="left:0;top:0" width="1919" height="1013" viewBox="0 0 1919 1013">
<defs>
<filter id="b1" x="-5%" y="-5%" width="110%" height="110%"><feGaussianBlur stdDeviation="0.9"/></filter>
<filter id="b2" x="-40%" y="-40%" width="180%" height="180%"><feGaussianBlur stdDeviation="6"/></filter>
<filter id="b3" x="-200%" y="-30%" width="500%" height="160%"><feGaussianBlur stdDeviation="8"/></filter>
<filter id="b4" x="-50%" y="-50%" width="200%" height="200%"><feGaussianBlur stdDeviation="22"/></filter>
<filter id="b5" x="-80%" y="-50%" width="260%" height="200%"><feGaussianBlur stdDeviation="15"/></filter>
<linearGradient id="skin" gradientUnits="userSpaceOnUse" x1="0" y1="520" x2="0" y2="925">
<stop offset="0" stop-color="#b08868"/><stop offset="0.2" stop-color="#a67c60"/><stop offset="0.45" stop-color="#9e7359"/><stop offset="0.62" stop-color="#8e644a"/><stop offset="0.75" stop-color="#775139"/><stop offset="1" stop-color="#65432c"/>
</linearGradient>
<clipPath id="pclip"><rect x="984" y="380" width="408" height="543.5"/></clipPath>
<radialGradient id="lensg" cx="0.5" cy="0.5" r="0.5"><stop offset="0" stop-color="#1a1c1e"/><stop offset="0.55" stop-color="#2a2d30"/><stop offset="0.8" stop-color="#3a3e42"/><stop offset="0.92" stop-color="#1c1e20"/><stop offset="1" stop-color="#0e0f10"/></radialGradient>
</defs>
<g clip-path="url(#pclip)">
<ellipse cx="1284" cy="925" rx="42" ry="165" fill="#544c46" opacity="0.74" filter="url(#b5)"/>
<ellipse cx="1330" cy="930" rx="70" ry="90" fill="#7a7c7a" opacity="0.45" filter="url(#b4)"/>
<g filter="url(#b1)"><path d="M1085.2 635.8 C1079.4 635.4 1078.6 636.3 1072.1 639.0 C1065.6 641.7 1052.2 648.4 1046.1 652.0 C1039.9 655.7 1036.5 657.1 1035.2 660.7 C1033.9 664.3 1035.9 668.7 1038.5 673.8 C1041.0 678.8 1047.3 686.0 1050.4 691.1 C1053.5 696.3 1052.6 697.9 1057.0 704.7 C1061.4 711.4 1068.9 723.2 1076.7 731.8 C1084.5 740.4 1096.3 749.1 1103.9 756.5 C1111.5 763.9 1119.1 769.6 1122.4 776.2 C1125.7 782.8 1123.8 788.9 1123.6 795.9 C1123.4 802.9 1122.2 807.7 1121.1 818.1 C1120.1 828.6 1119.1 846.9 1117.4 858.8 C1115.8 870.8 1113.3 878.8 1111.3 889.7 C1109.2 900.6 1107.2 913.1 1105.1 924.2 C1103.0 935.3 1100.0 943.5 1098.9 956.3 C1097.9 969.0 1079.2 993.3 1098.9 1000.7 C1118.7 1008.1 1197.7 1008.1 1217.3 1000.7 C1237.0 993.3 1217.0 969.0 1216.8 956.3 C1216.6 943.5 1216.4 941.5 1216.1 924.2 C1215.8 906.9 1215.5 871.2 1214.9 852.7 C1214.3 834.2 1212.4 825.1 1212.4 813.2 C1212.4 801.3 1213.2 789.8 1214.9 781.1 C1216.5 772.5 1219.6 770.0 1222.3 761.4 C1224.9 752.8 1228.8 742.1 1230.9 729.3 C1233.0 716.6 1233.9 693.1 1234.6 684.9 C1235.3 676.8 1234.8 686.1 1235.0 680.3 C1235.3 674.4 1235.4 657.5 1236.1 649.9 C1236.8 642.3 1237.0 638.3 1239.4 634.7 C1241.7 631.0 1247.4 631.4 1250.2 628.1 C1253.1 624.9 1255.8 619.1 1256.3 615.1 C1256.9 611.1 1255.6 607.2 1253.5 604.3 C1251.4 601.3 1247.0 598.6 1243.7 597.3 C1240.5 596.0 1237.2 595.5 1233.9 596.7 C1230.7 597.8 1226.3 600.1 1224.2 604.3 C1222.0 608.4 1220.9 617.3 1220.9 621.6 C1220.9 626.0 1232.3 627.1 1224.2 630.3 C1216.0 633.6 1191.6 639.4 1172.0 641.2 C1152.5 643.0 1121.4 642.1 1106.9 641.2 C1092.4 640.3 1091.0 636.1 1085.2 635.8 Z" fill="url(#skin)"/>
<path d="M1085.2 589.1 C1084.6 585.1 1083.0 573.5 1081.9 565.2 C1080.8 556.8 1079.0 546.0 1078.6 539.1 C1078.3 532.2 1078.3 527.3 1079.7 523.9 C1081.2 520.5 1084.6 518.8 1087.3 518.5 C1090.0 518.1 1093.7 518.6 1096.0 521.7 C1098.4 524.8 1099.6 530.8 1101.5 536.9 C1103.3 543.1 1104.5 551.0 1106.9 558.6 C1109.2 566.2 1113.6 577.5 1115.6 582.5 C1117.6 587.6 1118.3 588.0 1118.8 589.1 Z" fill="#ac8262"/>
<path d="M1138.4 589.1 C1138.5 586.9 1137.8 579.5 1139.0 576.0 C1140.3 572.6 1142.6 570.0 1146.0 568.4 C1149.3 566.8 1155.0 565.9 1159.0 566.2 C1163.0 566.6 1167.5 568.2 1169.9 570.6 C1172.2 572.9 1172.8 577.3 1173.1 580.4 C1173.5 583.4 1172.2 587.6 1172.0 589.1 Z" fill="#a07558"/>
<path d="M1175.3 589.1 C1175.4 587.1 1174.3 580.1 1176.0 577.1 C1177.6 574.1 1181.4 572.0 1185.1 571.2 C1188.8 570.5 1194.8 571.2 1198.1 572.8 C1201.4 574.3 1203.5 577.6 1204.6 580.4 C1205.7 583.1 1204.6 587.6 1204.6 589.1 Z" fill="#987052"/>
</g>
<g filter="url(#b2)">
<path d="M1190.2 783.6 C1193.9 755.6 1210.3 755.6 1214.9 783.6 C1219.4 811.6 1221.0 923.4 1217.3 951.3 C1213.6 979.3 1197.2 979.3 1192.7 951.3 C1188.1 923.4 1186.5 811.6 1190.2 783.6 Z" fill="#5e3a22" opacity="0.32" filter="url(#b3)"/>
<ellipse cx="1165" cy="722" rx="44" ry="24" fill="#bb8d6e" opacity="0.45" filter="url(#b2)"/>
<ellipse cx="1100" cy="735" rx="16" ry="26" fill="#c09272" opacity="0.4" filter="url(#b2)" transform="rotate(-40 1100 735)"/>
<ellipse cx="1088" cy="560" rx="5" ry="22" fill="#d0a080" opacity="0.5" transform="rotate(-8 1088 560)"/>
<ellipse cx="1068" cy="668" rx="18" ry="9" fill="#8a5c40" opacity="0.5" transform="rotate(35 1068 668)"/>
</g>
<g filter="url(#b1)"><path d="M1118.7 816.9 C1123.9 814.8 1135.9 819.9 1148.3 820.1 C1160.6 820.3 1182.0 819.3 1192.7 818.1 C1203.4 817.0 1205.8 813.0 1212.4 813.2 C1219.0 813.4 1227.5 816.5 1232.1 819.4 C1236.7 822.2 1239.2 826.4 1240.0 830.5 C1240.9 834.6 1240.9 840.3 1237.1 844.0 C1233.3 847.7 1224.7 850.6 1217.3 852.7 C1209.9 854.7 1203.4 855.5 1192.7 856.4 C1182.0 857.3 1165.1 859.1 1153.2 858.1 C1141.3 857.1 1127.2 854.4 1121.1 850.2 C1115.1 846.0 1117.1 838.5 1116.7 832.9 C1116.3 827.4 1113.4 819.0 1118.7 816.9 Z" fill="#1c1b1d"/>
<path d="M1150.2 821.1 C1151.7 818.2 1154.0 814.6 1155.2 820.6 C1156.3 826.6 1158.0 851.3 1157.1 857.1 C1156.3 862.9 1152.1 858.8 1150.2 855.6 C1148.4 852.4 1146.3 843.6 1146.3 837.9 C1146.3 832.1 1148.8 824.0 1150.2 821.1 Z" fill="#6a6566"/>
<path d="M1154.4 821.8 L1156.2 856.6" stroke="#c8c8c8" stroke-width="0.8" fill="none"/></g>
<g filter="url(#b1)">
<rect x="1076" y="588" width="159.5" height="93.6" rx="4" fill="#26292b"/>
<rect x="1076" y="588" width="19" height="93.6" rx="3" fill="#1b1d1f"/>
<rect x="1090.5" y="589" width="1.2" height="92" fill="#3e4245"/>
<rect x="1076" y="588" width="159.5" height="3" rx="1.5" fill="#3a3e41"/>
<rect x="1076" y="677.6" width="159.5" height="4" rx="2" fill="#141516"/>
<rect x="1215" y="588" width="20.5" height="93.6" rx="3" fill="#1f2123"/>
</g>
<g filter="url(#b1)">
<circle cx="1180.6" cy="634" r="43.6" fill="#17181a"/>
<circle cx="1180.6" cy="633" r="40.5" fill="none" stroke="#4a4e52" stroke-width="2.4"/>
<circle cx="1180.6" cy="633" r="36" fill="#2d3033"/>
<circle cx="1180.6" cy="633" r="31" fill="#43474b"/>
<circle cx="1180.6" cy="633" r="26.5" fill="#5c6064"/>
<circle cx="1180.6" cy="633" r="22" fill="#34373a"/>
<path d="M1150 650 A36 36 0 0 0 1212 650 L1205 640 L1158 640 Z" fill="#17181a" opacity="0.7"/>
<rect x="1159.5" y="612.4" width="38.5" height="32" rx="2" fill="#0d0e10"/>
<rect x="1164" y="617" width="30" height="25" rx="1.5" fill="#3a4046"/>
<rect x="1167" y="621" width="14" height="9" fill="#cfd8de"/>
<rect x="1169" y="624" width="9" height="3" fill="#4a5258"/>
<rect x="1176.5" y="630.4" width="17" height="8.6" rx="1" fill="#27c27e"/>
<rect x="1180" y="633" width="6" height="3" fill="#0d7a4c"/>
</g>
<rect x="1107" y="597" width="18.8" height="5.2" rx="2.2" fill="#f2f4f5" filter="url(#b1)"/>
<circle cx="1145.4" cy="599.6" r="1.6" fill="#d5d8da" filter="url(#b1)"/>
<text x="1100" y="637" font-family="'Liberation Serif',serif" font-weight="bold" font-size="8.6" textLength="31" lengthAdjust="spacingAndGlyphs" fill="#c2c2c2">SONY</text>
<text x="1216.4" y="675.2" font-family="'Liberation Sans',sans-serif" font-weight="bold" font-size="7.6" fill="#cfcfcf">G</text>
<g filter="url(#b1)"><path d="M1076.9 682.5 C1075.4 683.9 1076.5 685.3 1072.1 686.8 C1067.7 688.2 1056.0 693.3 1050.4 691.1 C1044.8 689.0 1041.0 678.8 1038.5 673.8 C1035.9 668.7 1033.9 664.3 1035.2 660.7 C1036.5 657.1 1039.9 655.7 1046.1 652.0 C1052.2 648.4 1065.6 641.8 1072.1 639.0 C1078.6 636.2 1082.6 634.4 1085.2 635.1 C1087.8 635.8 1087.8 639.1 1087.8 643.4 C1087.8 647.6 1086.2 654.9 1085.2 660.7 C1084.1 666.5 1082.6 674.5 1081.3 678.1 C1079.9 681.7 1078.4 681.0 1076.9 682.5 Z" fill="#a07a5e"/>
<path d="M1063.4 642.3 C1063.8 640.0 1079.2 636.2 1083.0 636.4 C1086.8 636.6 1086.6 641.1 1086.2 643.4 C1085.9 645.6 1084.6 650.1 1080.8 649.9 C1077.0 649.7 1063.1 644.5 1063.4 642.3 Z" fill="#bb8b6a" opacity="0.8"/></g>
<g filter="url(#b1)"><path d="M1233.9 596.7 C1236.8 596.0 1240.5 596.0 1243.7 597.3 C1247.0 598.6 1251.4 601.3 1253.5 604.3 C1255.6 607.2 1256.9 611.1 1256.3 615.1 C1255.8 619.1 1253.1 624.9 1250.2 628.1 C1247.4 631.4 1241.7 630.7 1239.4 634.7 C1237.1 638.6 1237.0 647.0 1236.3 652.0 C1235.7 657.1 1236.8 665.1 1235.5 665.1 C1234.2 665.1 1230.2 657.5 1228.5 652.0 C1226.8 646.6 1226.5 637.6 1225.3 632.5 C1224.0 627.4 1221.5 625.6 1220.9 621.6 C1220.4 617.7 1221.1 612.0 1222.0 608.6 C1222.9 605.2 1224.4 603.0 1226.3 601.0 C1228.3 599.0 1231.0 597.3 1233.9 596.7 Z" fill="#9c7358"/>
<path d="M1222.0 612.9 C1222.5 611.1 1225.6 616.4 1228.5 617.3 C1231.4 618.2 1236.1 618.7 1239.4 618.4 C1242.6 618.0 1247.0 613.9 1248.1 615.1 C1249.1 616.4 1248.1 623.4 1245.9 626.0 C1243.7 628.5 1238.5 630.0 1235.0 630.3 C1231.6 630.7 1227.4 631.0 1225.3 628.1 C1223.1 625.3 1221.5 614.8 1222.0 612.9 Z" fill="#7c4e34" opacity="0.75"/>
<path d="M1226.3 602.1 C1226.9 600.5 1233.2 598.5 1237.2 598.8 C1241.2 599.2 1247.4 601.9 1250.2 604.3 C1253.1 606.6 1254.9 612.2 1254.1 612.9 C1253.4 613.7 1249.3 609.3 1245.9 608.6 C1242.5 607.9 1237.2 609.7 1233.9 608.6 C1230.7 607.5 1225.8 603.7 1226.3 602.1 Z" fill="#b98a68" opacity="0.8"/></g>
</g>
</svg>
<!--PHOTOEND-->
<!--PHOTO-->
<div class="abs" style="left:1518px;top:117px;width:21px;height:896px;background:#4f4f4f"></div>
<div class="abs" style="left:1519px;top:864px;width:19px;height:32px;background:#626262;border-radius:9px"></div>
<svg class="abs" style="left:1523.0px;top:125.75px" width="11" height="6.5" viewBox="-1 -1 11 6.5"><path d="M0 4.5 L4.5 0 L9 4.5" fill="none" stroke="#a8a8a8" stroke-width="1.6" stroke-linecap="round" stroke-linejoin="round"/></svg>
<svg class="abs" style="left:1523.0px;top:986.25px" width="11" height="6.5" viewBox="-1 -1 11 6.5"><path d="M0 0 L4.5 4.5 L9 0" fill="none" stroke="#a8a8a8" stroke-width="1.6" stroke-linecap="round" stroke-linejoin="round"/></svg>
<div class="abs" style="left:52px;top:999px;width:1466px;height:14px;background:#535353"></div>
<div class="abs" style="left:57px;top:1001px;width:63px;height:12px;background:#474747;border-radius:3px 0 0 0"></div>
<div class="abs" style="left:121px;top:1001px;width:21px;height:12px;background:#4a4a4a;border-radius:0 3px 0 0"></div>
<svg class="abs" style="left:125.0px;top:1009.2px" width="11" height="7" viewBox="-1 -1 11 7"><path d="M0 0 L4.5 5 L9 0" fill="none" stroke="#f0f0f0" stroke-width="2" stroke-linecap="round" stroke-linejoin="round"/></svg>
<div class="abs" style="left:60px;top:1006px;font-family:'Liberation Mono',monospace;font-size:13px;line-height:14px;color:#e6e6e6">33.33%</div>
<div class="abs" style="left:149px;top:1001px;width:61px;height:12px;background:#474747;border-radius:3px 0 0 0"></div>
<div class="abs" style="left:212px;top:1001px;width:21px;height:12px;background:#4a4a4a;border-radius:0 3px 0 0"></div>
<svg class="abs" style="left:216.0px;top:1009.2px" width="11" height="7" viewBox="-1 -1 11 7"><path d="M0 0 L4.5 5 L9 0" fill="none" stroke="#f0f0f0" stroke-width="2" stroke-linecap="round" stroke-linejoin="round"/></svg>
<div class="abs" style="left:152px;top:1006px;font-family:'Liberation Mono',monospace;font-size:13px;line-height:14px;color:#e6e6e6">0°</div>
<svg class="abs" style="left:244px;top:1006px" width="32" height="8" viewBox="0 0 32 8"><g fill="#c4c4c4"><rect x="1" y="1" width="2.2" height="8"/><path d="M10.5 0 L10.5 8 L4 8 Z"/><path d="M30 0 L30 8 L22.5 8 Z"/></g></svg>
<div class="abs" style="left:286px;top:1001px;width:49px;height:12px;background:#474747;border-radius:3px 0 0 0"></div>
<div class="abs" style="left:337px;top:1001px;width:20px;height:12px;background:#4a4a4a;border-radius:0 3px 0 0"></div>
<svg class="abs" style="left:341.0px;top:1009.2px" width="11" height="7" viewBox="-1 -1 11 7"><path d="M0 0 L4.5 5 L9 0" fill="none" stroke="#f0f0f0" stroke-width="2" stroke-linecap="round" stroke-linejoin="round"/></svg>
<div class="abs" style="left:289px;top:1006px;font-family:'Liberation Mono',monospace;font-size:13px;line-height:14px;color:#e6e6e6">6</div>
<svg class="abs" style="left:370px;top:1006px" width="32" height="8" viewBox="0 0 32 8"><g fill="#6a6a6a"><path d="M1 0 L1 8 L8.5 8 Z"/><path d="M20 0 L20 8 L27 8 Z"/><rect x="28" y="1" width="2.2" height="8"/></g></svg>
<div class="abs serif" style="left:521px;top:1006px;font-size:14px;line-height:16px;color:#e0e0e0;letter-spacing:1px">选择</div>
<div class="abs" style="left:661px;top:1001px;width:1px;height:12px;background:#474747"></div>
<svg class="abs" style="left:669px;top:1006px" width="9" height="8" viewBox="0 0 9 8"><path d="M1 0 L1 8 L8.5 8 Z" fill="#d0d0d0"/></svg>
<svg class="abs" style="left:689.75px;top:1006.5px" width="6.5" height="11" viewBox="-1 -1 6.5 11"><path d="M4.5 0 L0 4.5 L4.5 9" fill="none" stroke="#b0b0b0" stroke-width="1.5" stroke-linecap="round" stroke-linejoin="round"/></svg>
<div class="abs" style="left:1312px;top:1002px;width:31px;height:16px;background:#646464;border-radius:7px"></div>
<svg class="abs" style="left:1504.25px;top:1006.5px" width="6.5" height="11" viewBox="-1 -1 6.5 11"><path d="M0 0 L4.5 4.5 L0 9" fill="none" stroke="#b0b0b0" stroke-width="1.5" stroke-linecap="round" stroke-linejoin="round"/></svg>
<!--SCROLL-->
<!--DOCKSTART--><div class="abs" style="left:1539px;top:83px;width:380px;height:930px;background:#535353"></div>
<div class="abs" style="left:1539px;top:83px;width:2px;height:930px;background:#444"></div>
<div class="abs" style="left:1541px;top:83px;width:378px;height:13px;background:#474747"></div><div class="abs" style="left:1541px;top:96px;width:378px;height:1px;background:#3e3e3e"></div>
<div class="abs" style="left:1541px;top:97px;width:48px;height:916px;background:#525252"></div>
<div class="abs" style="left:1542px;top:97px;width:46px;height:84px;background:#555;border-radius:2px"></div>
<div class="abs" style="left:1541px;top:181px;width:48px;height:2px;background:#434343"></div>
<div class="abs" style="left:1542px;top:183px;width:46px;height:50px;background:#555;border-radius:2px"></div>
<div class="abs" style="left:1541px;top:233px;width:48px;height:2px;background:#434343"></div>
<div class="abs" style="left:1542px;top:235px;width:46px;height:119px;background:#555;border-radius:2px"></div>
<div class="abs" style="left:1541px;top:354px;width:48px;height:2px;background:#434343"></div>
<div class="abs" style="left:1542px;top:356px;width:46px;height:84px;background:#555;border-radius:2px"></div>
<div class="abs" style="left:1541px;top:440px;width:48px;height:2px;background:#434343"></div>
<div class="abs" style="left:1542px;top:442px;width:46px;height:50px;background:#555;border-radius:2px"></div>
<div class="abs" style="left:1541px;top:492px;width:48px;height:2px;background:#434343"></div>
<div class="abs" style="left:1542px;top:494px;width:46px;height:84px;background:#555;border-radius:2px"></div>
<div class="abs" style="left:1541px;top:578px;width:48px;height:2px;background:#434343"></div>
<div class="abs" style="left:1589px;top:97px;width:2px;height:916px;background:#444"></div>
<svg class="abs" style="left:0;top:0" width="1919" height="1013" viewBox="0 0 1919 1013">
<path d="M1576.4 86 L1573.4 89 L1576.4 92 Z M1581.4 86 L1578.4 89 L1581.4 92 Z" fill="#d8d8d8"/>
<path d="M1904 86 L1907 89 L1904 92 Z M1909 86 L1912 89 L1909 92 Z" fill="#d8d8d8"/>
<g fill="#3c3c3c"><rect x="1553" y="101" width="1.4" height="5"/><rect x="1556" y="101" width="1.4" height="5"/><rect x="1559" y="101" width="1.4" height="5"/><rect x="1563" y="101" width="1.4" height="5"/><rect x="1566" y="101" width="1.4" height="5"/><rect x="1569" y="101" width="1.4" height="5"/><rect x="1573" y="101" width="1.4" height="5"/><rect x="1576" y="101" width="1.4" height="5"/></g>
<g fill="#3c3c3c"><rect x="1553" y="187" width="1.4" height="5"/><rect x="1556" y="187" width="1.4" height="5"/><rect x="1559" y="187" width="1.4" height="5"/><rect x="1563" y="187" width="1.4" height="5"/><rect x="1566" y="187" width="1.4" height="5"/><rect x="1569" y="187" width="1.4" height="5"/><rect x="1573" y="187" width="1.4" height="5"/><rect x="1576" y="187" width="1.4" height="5"/></g>
<g fill="#3c3c3c"><rect x="1553" y="239" width="1.4" height="5"/><rect x="1556" y="239" width="1.4" height="5"/><rect x="1559" y="239" width="1.4" height="5"/><rect x="1563" y="239" width="1.4" height="5"/><rect x="1566" y="239" width="1.4" height="5"/><rect x="1569" y="239" width="1.4" height="5"/><rect x="1573" y="239" width="1.4" height="5"/><rect x="1576" y="239" width="1.4" height="5"/></g>
<g fill="#3c3c3c"><rect x="1553" y="360" width="1.4" height="5"/><rect x="1556" y="360" width="1.4" height="5"/><rect x="1559" y="360" width="1.4" height="5"/><rect x="1563" y="360" width="1.4" height="5"/><rect x="1566" y="360" width="1.4" height="5"/><rect x="1569" y="360" width="1.4" height="5"/><rect x="1573" y="360" width="1.4" height="5"/><rect x="1576" y="360" width="1.4" height="5"/></g>
<g fill="#3c3c3c"><rect x="1553" y="446" width="1.4" height="5"/><rect x="1556" y="446" width="1.4" height="5"/><rect x="1559" y="446" width="1.4" height="5"/><rect x="1563" y="446" width="1.4" height="5"/><rect x="1566" y="446" width="1.4" height="5"/><rect x="1569" y="446" width="1.4" height="5"/><rect x="1573" y="446" width="1.4" height="5"/><rect x="1576" y="446" width="1.4" height="5"/></g>
<g fill="#3c3c3c"><rect x="1553" y="498" width="1.4" height="5"/><rect x="1556" y="498" width="1.4" height="5"/><rect x="1559" y="498" width="1.4" height="5"/><rect x="1563" y="498" width="1.4" height="5"/><rect x="1566" y="498" width="1.4" height="5"/><rect x="1569" y="498" width="1.4" height="5"/><rect x="1573" y="498" width="1.4" height="5"/><rect x="1576" y="498" width="1.4" height="5"/></g>
<path d="M1570.56 129.40 L1570.56 131.00 L1568.14 131.94 L1567.69 133.03 L1568.74 135.40 L1567.60 136.54 L1565.23 135.49 L1564.14 135.94 L1563.20 138.36 L1561.60 138.36 L1560.66 135.94 L1559.57 135.49 L1557.20 136.54 L1556.06 135.40 L1557.11 133.03 L1556.66 131.94 L1554.24 131.00 L1554.24 129.40 L1556.66 128.46 L1557.11 127.37 L1556.06 125.00 L1557.20 123.86 L1559.57 124.91 L1560.66 124.46 L1561.60 122.04 L1563.20 122.04 L1564.14 124.46 L1565.23 124.91 L1567.60 123.86 L1568.74 125.00 L1567.69 127.37 L1568.14 128.46 Z M1565.60 130.20 A3.2 3.2 0 1 0 1559.20 130.20 A3.2 3.2 0 1 0 1565.60 130.20 Z" fill="#d2d2d2" fill-rule="evenodd"/><path d="M1577.77 119.85 L1577.77 120.95 L1576.03 121.56 L1575.73 122.29 L1576.53 123.95 L1575.75 124.73 L1574.09 123.93 L1573.36 124.23 L1572.75 125.97 L1571.65 125.97 L1571.04 124.23 L1570.31 123.93 L1568.65 124.73 L1567.87 123.95 L1568.67 122.29 L1568.37 121.56 L1566.63 120.95 L1566.63 119.85 L1568.37 119.24 L1568.67 118.51 L1567.87 116.85 L1568.65 116.07 L1570.31 116.87 L1571.04 116.57 L1571.65 114.83 L1572.75 114.83 L1573.36 116.57 L1574.09 116.87 L1575.75 116.07 L1576.53 116.85 L1575.73 118.51 L1576.03 119.24 Z M1574.30 120.40 A2.1 2.1 0 1 0 1570.10 120.40 A2.1 2.1 0 1 0 1574.30 120.40 Z" fill="#d2d2d2" fill-rule="evenodd"/>
<path d="M1558.6 153.6 L1574.4 161.4 L1558.6 169.4 Z" fill="#d2d2d2"/>
<circle cx="1565.3" cy="213.2" r="10.2" fill="#d2d2d2"/><circle cx="1565.6" cy="207.4" r="1.7" fill="#555"/><path d="M1562.6 210.8 H1567.2 V218 H1569 V219.8 H1562.4 V218 H1564.2 V212.6 H1562.6 Z" fill="#555"/>
<text x="1555.4" y="271.8" font-family="'Liberation Sans',sans-serif" font-weight="bold" font-size="22" fill="#d2d2d2">A</text><rect x="1574.2" y="252.4" width="1.4" height="22.6" fill="#d2d2d2"/>
<path d="M1571.6 291 V309 H1569.2 V293.2 H1566.8 V309 H1564.4 V301.4 H1563 A5.2 5.2 0 0 1 1563 291 Z" fill="#d2d2d2"/>
<text x="1555.2" y="344.4" font-family="'Liberation Serif',serif" font-style="italic" font-weight="bold" font-size="27" fill="#d2d2d2">O</text>
<rect x="1555" y="380.2" width="13.6" height="9.4" rx="4.7" fill="none" stroke="#d2d2d2" stroke-width="2.3"/><rect x="1563" y="380.2" width="13.6" height="9.4" rx="4.7" fill="none" stroke="#d2d2d2" stroke-width="2.3"/>
<rect x="1555.2" y="410.4" width="15" height="15" rx="2" fill="none" stroke="#d2d2d2" stroke-width="1.5"/><rect x="1558.8" y="413.6" width="15.4" height="15.4" rx="2" fill="#555" stroke="#d2d2d2" stroke-width="1.5"/><path d="M1566 413.6 V422.4 L1568.2 420.4 L1570.4 422.4 V413.6 Z" fill="#d2d2d2"/>
<path d="M1563.4 464 H1556.2 V480.8 H1573.8 V472.6" fill="none" stroke="#d2d2d2" stroke-width="2"/><path d="M1563.6 474 L1576.4 461.2" stroke="#d2d2d2" stroke-width="2"/><path d="M1568.6 460.2 H1577.4 V469" fill="none" stroke="#d2d2d2" stroke-width="2"/>
<path d="M1556 513.8 H1574.6 V532.2 H1556 Z M1570 522.6 A5.5 5.5 0 1 0 1559 522.6 A5.5 5.5 0 1 0 1570 522.6 Z" fill="#d2d2d2" fill-rule="evenodd"/><circle cx="1558.8" cy="517" r="4.6" fill="#d2d2d2" stroke="#555" stroke-width="1"/>
<circle cx="1565.3" cy="558.2" r="7.8" fill="#d2d2d2"/><circle cx="1565.3" cy="558.2" r="10.4" fill="none" stroke="#d2d2d2" stroke-width="1.2" stroke-dasharray="2.4 1.8"/>
</svg>
<div class="abs" style="left:1591px;top:97px;width:328px;height:33px;background:#424242"></div>
<div class="abs" style="left:1681px;top:97px;width:52px;height:34px;background:#535353"></div>
<div class="abs sans" style="left:1603px;top:102px;font-size:15.6px;line-height:22px;color:#b4b4b4;white-space:nowrap;letter-spacing:0.5px">属性</div>
<div class="abs sans" style="left:1647px;top:102px;font-size:15.6px;line-height:22px;color:#b4b4b4;white-space:nowrap;letter-spacing:0.5px">画板</div>
<div class="abs sans" style="left:1690px;top:102px;font-size:15.6px;line-height:22px;color:#f2f2f2;white-space:nowrap;letter-spacing:0.5px">图层</div>
<div class="abs sans" style="left:1744px;top:102px;font-size:15.6px;line-height:22px;color:#b4b4b4;white-space:nowrap;letter-spacing:0.5px">描边</div>
<div class="abs sans" style="left:1788px;top:102px;font-size:15.6px;line-height:22px;color:#b4b4b4;white-space:nowrap;letter-spacing:0.5px">渐变</div>
<div class="abs sans" style="left:1832px;top:102px;width:38px;overflow:hidden;font-size:15.6px;line-height:22px;color:#b4b4b4;white-space:nowrap;letter-spacing:0.5px">透明度</div>
<svg class="abs" style="left:1898px;top:108px" width="14" height="11" viewBox="0 0 14 11"><path d="M0 1 H14 M0 5.5 H14 M0 10 H14" stroke="#cfcfcf" stroke-width="1.6"/></svg>
<div class="abs" style="left:1606px;top:146px;width:269px;height:26px;background:#454545;border-radius:3px"></div>
<svg class="abs" style="left:1612px;top:150px" width="18" height="18" viewBox="0 0 18 18"><circle cx="7" cy="7" r="4.6" fill="none" stroke="#e4e4e4" stroke-width="1.8"/><path d="M10.6 10.6 L15.4 15.4" stroke="#e4e4e4" stroke-width="2.2" stroke-linecap="round"/></svg>
<div class="abs serif" style="left:1641px;top:148px;font-size:14px;line-height:20px;color:#5e5e5e;letter-spacing:1px">搜索所有</div>
<svg class="abs" style="left:1888px;top:150px" width="19" height="19" viewBox="0 0 19 19"><path d="M0.5 1 H18.5 L11.6 9.4 V17.6 L7.6 15 V9.4 Z" fill="#d6d6d6"/></svg>
<!--DOCKEND-->
<!--DOCK-->
<!--LAYERSSTART--><div class="abs" style="left:1591px;top:183px;width:328px;height:830px;background:#535353"></div>
<svg class="abs" style="left:0;top:0" width="1919" height="1013" viewBox="0 0 1919 1013">
<defs><linearGradient id="rb2" x1="0" y1="1" x2="1" y2="0"><stop offset="0" stop-color="#00a5e3"/><stop offset="0.2" stop-color="#5a2d91"/><stop offset="0.4" stop-color="#e5007d"/><stop offset="0.6" stop-color="#e6332a"/><stop offset="0.8" stop-color="#ffed00"/><stop offset="1" stop-color="#2fa836"/></linearGradient></defs>
<rect x="1850.5" y="183" width="1" height="586" fill="#636363"/>
<rect x="1850.5" y="183" width="46" height="1" fill="#5e5e5e"/>
<rect x="1631" y="209.4" width="266" height="1" fill="#626262"/>
<g transform="translate(1611.8,196.7)"><path d="M-7.4 0 C-4.6 -4.7 4.6 -4.7 7.4 0 C4.6 4.7 -4.6 4.7 -7.4 0 Z" fill="none" stroke="#dcdcdc" stroke-width="1.7"/><circle r="2.7" fill="#dcdcdc"/><circle cx="-0.3" cy="-0.2" r="1" fill="#535353"/></g>
<circle cx="1865" cy="197.3" r="4.6" fill="none" stroke="#dadada" stroke-width="1.3"/>
<rect x="1652" y="184.2" width="4.6" height="25.1" fill="#f48fb0"/>
<rect x="1690" y="186.2" width="21" height="21" fill="#fff" stroke="#111" stroke-width="1.3"/>
<rect x="1691.5" y="190.2" width="18" height="12" fill="#000"/><rect x="1704" y="194.2" width="5" height="8" fill="#cfcfcf"/><rect x="1699" y="195.7" width="3" height="4" fill="#e8e8e8"/><rect x="1705.4" y="196.2" width="2" height="4" fill="#333"/>
<path d="M1667.4 194.9 L1671.5 199.1 L1675.6 194.9" fill="none" stroke="#f0f0f0" stroke-width="1.7" stroke-linecap="round" stroke-linejoin="round"/>
<rect x="1631" y="235.6" width="266" height="1" fill="#626262"/>
<g transform="translate(1611.8,223.0)"><path d="M-7.4 0 C-4.6 -4.7 4.6 -4.7 7.4 0 C4.6 4.7 -4.6 4.7 -7.4 0 Z" fill="none" stroke="#dcdcdc" stroke-width="1.7"/><circle r="2.7" fill="#dcdcdc"/><circle cx="-0.3" cy="-0.2" r="1" fill="#535353"/></g>
<circle cx="1865" cy="223.6" r="4.6" fill="none" stroke="#dadada" stroke-width="1.3"/>
<rect x="1652" y="210.5" width="4.6" height="25.1" fill="#9d96ff"/>
<rect x="1718.5" y="212.5" width="21" height="21" fill="#fff" stroke="#111" stroke-width="1.3"/>
<path d="M1695.8 218.4 L1700.4 222.8 L1695.8 227.2" fill="none" stroke="#f0f0f0" stroke-width="1.7" stroke-linecap="round" stroke-linejoin="round"/>
<rect x="1631" y="261.9" width="266" height="1" fill="#626262"/>
<g transform="translate(1611.8,249.3)"><path d="M-7.4 0 C-4.6 -4.7 4.6 -4.7 7.4 0 C4.6 4.7 -4.6 4.7 -7.4 0 Z" fill="none" stroke="#dcdcdc" stroke-width="1.7"/><circle r="2.7" fill="#dcdcdc"/><circle cx="-0.3" cy="-0.2" r="1" fill="#535353"/></g>
<circle cx="1865" cy="249.9" r="4.6" fill="none" stroke="#dadada" stroke-width="1.3"/>
<rect x="1652" y="236.7" width="4.6" height="25.1" fill="#9d96ff"/>
<rect x="1718.5" y="238.7" width="21" height="21" fill="#fff" stroke="#111" stroke-width="1.3"/>
<ellipse cx="1722.9" cy="243.7" rx="2.6" ry="1.6" fill="#000"/><ellipse cx="1727.9" cy="243.9" rx="2.4" ry="1.5" fill="#000"/><ellipse cx="1735.9" cy="248.7" rx="2.6" ry="2.2" fill="#000"/><rect x="1735.5" y="250.7" width="1.6" height="3.6" fill="#000"/>
<path d="M1695.8 244.7 L1700.4 249.1 L1695.8 253.5" fill="none" stroke="#f0f0f0" stroke-width="1.7" stroke-linecap="round" stroke-linejoin="round"/>
<rect x="1631" y="288.2" width="266" height="1" fill="#626262"/>
<g transform="translate(1611.8,275.5)"><path d="M-7.4 0 C-4.6 -4.7 4.6 -4.7 7.4 0 C4.6 4.7 -4.6 4.7 -7.4 0 Z" fill="none" stroke="#dcdcdc" stroke-width="1.7"/><circle r="2.7" fill="#dcdcdc"/><circle cx="-0.3" cy="-0.2" r="1" fill="#535353"/></g>
<circle cx="1865" cy="276.1" r="4.6" fill="none" stroke="#dadada" stroke-width="1.3"/>
<rect x="1652" y="263.0" width="4.6" height="25.1" fill="#b3131b"/>
<rect x="1718.5" y="265.0" width="21" height="21" fill="#fff" stroke="#111" stroke-width="1.3"/>
<rect x="1719.5" y="270.0" width="19" height="12" fill="url(#rb2)"/><circle cx="1731.9" cy="276.0" r="4.6" fill="#222" stroke="#888" stroke-width="0.7"/><circle cx="1731.9" cy="276.0" r="2" fill="#555"/><path d="M1719.5 270.0 l4 6 l-4 6 Z" fill="#2255cc" opacity="0.7"/>
<path d="M1695.9 273.7 L1700 277.9 L1704.1 273.7" fill="none" stroke="#f0f0f0" stroke-width="1.7" stroke-linecap="round" stroke-linejoin="round"/>
<rect x="1631" y="314.4" width="266" height="1" fill="#626262"/>
<g transform="translate(1611.8,301.8)"><path d="M-7.4 0 C-4.6 -4.7 4.6 -4.7 7.4 0 C4.6 4.7 -4.6 4.7 -7.4 0 Z" fill="none" stroke="#dcdcdc" stroke-width="1.7"/><circle r="2.7" fill="#dcdcdc"/><circle cx="-0.3" cy="-0.2" r="1" fill="#535353"/></g>
<circle cx="1865" cy="302.4" r="4.6" fill="none" stroke="#dadada" stroke-width="1.3"/>
<rect x="1652" y="289.3" width="4.6" height="25.1" fill="#b3131b"/>
<rect x="1746.5" y="291.3" width="21" height="21" fill="#fff" stroke="#111" stroke-width="1.3"/>
<rect x="1755.5" y="291.9" width="1.6" height="19.8" fill="#222"/>
<rect x="1631" y="340.7" width="266" height="1" fill="#626262"/>
<g transform="translate(1611.8,328.1)"><path d="M-7.4 0 C-4.6 -4.7 4.6 -4.7 7.4 0 C4.6 4.7 -4.6 4.7 -7.4 0 Z" fill="none" stroke="#dcdcdc" stroke-width="1.7"/><circle r="2.7" fill="#dcdcdc"/><circle cx="-0.3" cy="-0.2" r="1" fill="#535353"/></g>
<circle cx="1865" cy="328.7" r="4.6" fill="none" stroke="#dadada" stroke-width="1.3"/>
<rect x="1652" y="315.6" width="4.6" height="25.1" fill="#b3131b"/>
<rect x="1746.5" y="317.6" width="21" height="21" fill="#fff" stroke="#111" stroke-width="1.3"/>
<clipPath id="lc5"><circle cx="1757.0" cy="328.1" r="8.6"/></clipPath><circle cx="1757.0" cy="328.1" r="8.6" fill="#0a1226"/><path d="M1746.5 324.6 L1767.5 334.6 V338.6 H1746.5 Z" fill="#6a7a8a" clip-path="url(#lc5)"/>
<rect x="1631" y="367.0" width="266" height="1" fill="#626262"/>
<g transform="translate(1611.8,354.4)"><path d="M-7.4 0 C-4.6 -4.7 4.6 -4.7 7.4 0 C4.6 4.7 -4.6 4.7 -7.4 0 Z" fill="none" stroke="#dcdcdc" stroke-width="1.7"/><circle r="2.7" fill="#dcdcdc"/><circle cx="-0.3" cy="-0.2" r="1" fill="#535353"/></g>
<circle cx="1865" cy="355.0" r="4.6" fill="none" stroke="#dadada" stroke-width="1.3"/>
<rect x="1652" y="341.8" width="4.6" height="25.1" fill="#b3131b"/>
<rect x="1746.5" y="343.8" width="21" height="21" fill="#fff" stroke="#111" stroke-width="1.3"/>
<rect x="1747.9" y="347.8" width="18.2" height="13.6" fill="#000"/>
<rect x="1631" y="393.3" width="266" height="1" fill="#626262"/>
<g transform="translate(1611.8,380.6)"><path d="M-7.4 0 C-4.6 -4.7 4.6 -4.7 7.4 0 C4.6 4.7 -4.6 4.7 -7.4 0 Z" fill="none" stroke="#dcdcdc" stroke-width="1.7"/><circle r="2.7" fill="#dcdcdc"/><circle cx="-0.3" cy="-0.2" r="1" fill="#535353"/></g>
<circle cx="1865" cy="381.2" r="4.6" fill="none" stroke="#dadada" stroke-width="1.3"/>
<rect x="1652" y="368.1" width="4.6" height="25.1" fill="#b3131b"/>
<rect x="1746.5" y="370.1" width="21" height="21" fill="#fff" stroke="#111" stroke-width="1.3"/>
<rect x="1631" y="419.5" width="266" height="1" fill="#626262"/>
<g transform="translate(1611.8,406.9)"><path d="M-7.4 0 C-4.6 -4.7 4.6 -4.7 7.4 0 C4.6 4.7 -4.6 4.7 -7.4 0 Z" fill="none" stroke="#dcdcdc" stroke-width="1.7"/><circle r="2.7" fill="#dcdcdc"/><circle cx="-0.3" cy="-0.2" r="1" fill="#535353"/></g>
<circle cx="1865" cy="407.5" r="4.6" fill="none" stroke="#dadada" stroke-width="1.3"/>
<rect x="1652" y="394.4" width="4.6" height="25.1" fill="#b3131b"/>
<rect x="1746.5" y="396.4" width="21" height="21" fill="#fff" stroke="#111" stroke-width="1.3"/>
<path d="M1749.5 408.4 L1754.5 406.8 L1758.5 407.4 L1765.0 408.4 Z" fill="#111"/>
<rect x="1631" y="445.8" width="266" height="1" fill="#626262"/>
<g transform="translate(1611.8,433.2)"><path d="M-7.4 0 C-4.6 -4.7 4.6 -4.7 7.4 0 C4.6 4.7 -4.6 4.7 -7.4 0 Z" fill="none" stroke="#dcdcdc" stroke-width="1.7"/><circle r="2.7" fill="#dcdcdc"/><circle cx="-0.3" cy="-0.2" r="1" fill="#535353"/></g>
<circle cx="1865" cy="433.8" r="4.6" fill="none" stroke="#dadada" stroke-width="1.3"/>
<rect x="1652" y="420.6" width="4.6" height="25.1" fill="#b3131b"/>
<rect x="1746.5" y="422.6" width="21" height="21" fill="#fff" stroke="#111" stroke-width="1.3"/>
<rect x="1631" y="472.1" width="266" height="1" fill="#626262"/>
<g transform="translate(1611.8,459.4)"><path d="M-7.4 0 C-4.6 -4.7 4.6 -4.7 7.4 0 C4.6 4.7 -4.6 4.7 -7.4 0 Z" fill="none" stroke="#dcdcdc" stroke-width="1.7"/><circle r="2.7" fill="#dcdcdc"/><circle cx="-0.3" cy="-0.2" r="1" fill="#535353"/></g>
<circle cx="1865" cy="460.0" r="4.6" fill="none" stroke="#dadada" stroke-width="1.3"/>
<rect x="1652" y="446.9" width="4.6" height="25.1" fill="#b3131b"/>
<rect x="1746.5" y="448.9" width="21" height="21" fill="#fff" stroke="#111" stroke-width="1.3"/>
<path d="M1749.5 468.3 Q1756.5 469.5 1764.5 467.9" stroke="#888" stroke-width="0.8" fill="none"/>
<rect x="1631" y="498.3" width="266" height="1" fill="#626262"/>
<g transform="translate(1611.8,485.7)"><path d="M-7.4 0 C-4.6 -4.7 4.6 -4.7 7.4 0 C4.6 4.7 -4.6 4.7 -7.4 0 Z" fill="none" stroke="#dcdcdc" stroke-width="1.7"/><circle r="2.7" fill="#dcdcdc"/><circle cx="-0.3" cy="-0.2" r="1" fill="#535353"/></g>
<circle cx="1865" cy="486.3" r="4.6" fill="none" stroke="#dadada" stroke-width="1.3"/>
<rect x="1652" y="473.2" width="4.6" height="25.1" fill="#b3131b"/>
<rect x="1746.5" y="475.2" width="21" height="21" fill="#fff" stroke="#111" stroke-width="1.3"/>
<rect x="1631" y="524.6" width="266" height="1" fill="#626262"/>
<g transform="translate(1611.8,512.0)"><path d="M-7.4 0 C-4.6 -4.7 4.6 -4.7 7.4 0 C4.6 4.7 -4.6 4.7 -7.4 0 Z" fill="none" stroke="#dcdcdc" stroke-width="1.7"/><circle r="2.7" fill="#dcdcdc"/><circle cx="-0.3" cy="-0.2" r="1" fill="#535353"/></g>
<circle cx="1865" cy="512.6" r="4.6" fill="none" stroke="#dadada" stroke-width="1.3"/>
<rect x="1652" y="499.4" width="4.6" height="25.1" fill="#b3131b"/>
<rect x="1746.5" y="501.4" width="21" height="21" fill="#fff" stroke="#111" stroke-width="1.3"/>
<rect x="1631" y="550.9" width="266" height="1" fill="#626262"/>
<g transform="translate(1611.8,538.2)"><path d="M-7.4 0 C-4.6 -4.7 4.6 -4.7 7.4 0 C4.6 4.7 -4.6 4.7 -7.4 0 Z" fill="none" stroke="#dcdcdc" stroke-width="1.7"/><circle r="2.7" fill="#dcdcdc"/><circle cx="-0.3" cy="-0.2" r="1" fill="#535353"/></g>
<circle cx="1865" cy="538.8" r="4.6" fill="none" stroke="#dadada" stroke-width="1.3"/>
<rect x="1652" y="525.7" width="4.6" height="25.1" fill="#b3131b"/>
<rect x="1746.5" y="527.7" width="21" height="21" fill="#fff" stroke="#111" stroke-width="1.3"/>
<rect x="1631" y="577.1" width="266" height="1" fill="#626262"/>
<g transform="translate(1611.8,564.5)"><path d="M-7.4 0 C-4.6 -4.7 4.6 -4.7 7.4 0 C4.6 4.7 -4.6 4.7 -7.4 0 Z" fill="none" stroke="#dcdcdc" stroke-width="1.7"/><circle r="2.7" fill="#dcdcdc"/><circle cx="-0.3" cy="-0.2" r="1" fill="#535353"/></g>
<circle cx="1865" cy="565.1" r="4.6" fill="none" stroke="#dadada" stroke-width="1.3"/>
<rect x="1652" y="552.0" width="4.6" height="25.1" fill="#b3131b"/>
<rect x="1746.5" y="554.0" width="21" height="21" fill="#fff" stroke="#111" stroke-width="1.3"/>
<rect x="1631" y="603.4" width="266" height="1" fill="#626262"/>
<g transform="translate(1611.8,590.8)"><path d="M-7.4 0 C-4.6 -4.7 4.6 -4.7 7.4 0 C4.6 4.7 -4.6 4.7 -7.4 0 Z" fill="none" stroke="#dcdcdc" stroke-width="1.7"/><circle r="2.7" fill="#dcdcdc"/><circle cx="-0.3" cy="-0.2" r="1" fill="#535353"/></g>
<circle cx="1865" cy="591.4" r="4.6" fill="none" stroke="#dadada" stroke-width="1.3"/>
<rect x="1652" y="578.2" width="4.6" height="25.1" fill="#b3131b"/>
<rect x="1746.5" y="580.2" width="21" height="21" fill="#fff" stroke="#111" stroke-width="1.3"/>
<path d="M1749.1 591.9 Q1756.5 590.2 1765.5 591.2" stroke="#222" stroke-width="1.1" fill="none"/>
<rect x="1631" y="629.7" width="266" height="1" fill="#626262"/>
<g transform="translate(1611.8,617.1)"><path d="M-7.4 0 C-4.6 -4.7 4.6 -4.7 7.4 0 C4.6 4.7 -4.6 4.7 -7.4 0 Z" fill="none" stroke="#dcdcdc" stroke-width="1.7"/><circle r="2.7" fill="#dcdcdc"/><circle cx="-0.3" cy="-0.2" r="1" fill="#535353"/></g>
<circle cx="1865" cy="617.7" r="4.6" fill="none" stroke="#dadada" stroke-width="1.3"/>
<rect x="1652" y="604.5" width="4.6" height="25.1" fill="#b3131b"/>
<rect x="1746.5" y="606.5" width="21" height="21" fill="#fff" stroke="#111" stroke-width="1.3"/>
<rect x="1631" y="656.0" width="266" height="1" fill="#626262"/>
<g transform="translate(1611.8,643.3)"><path d="M-7.4 0 C-4.6 -4.7 4.6 -4.7 7.4 0 C4.6 4.7 -4.6 4.7 -7.4 0 Z" fill="none" stroke="#dcdcdc" stroke-width="1.7"/><circle r="2.7" fill="#dcdcdc"/><circle cx="-0.3" cy="-0.2" r="1" fill="#535353"/></g>
<circle cx="1865" cy="643.9" r="4.6" fill="none" stroke="#dadada" stroke-width="1.3"/>
<rect x="1652" y="630.8" width="4.6" height="25.1" fill="#b3131b"/>
<rect x="1746.5" y="632.8" width="21" height="21" fill="#fff" stroke="#111" stroke-width="1.3"/>
<circle cx="1757.0" cy="643.3" r="9.4" fill="#000"/>
<rect x="1631" y="682.2" width="266" height="1" fill="#626262"/>
<g transform="translate(1611.8,669.6)"><path d="M-7.4 0 C-4.6 -4.7 4.6 -4.7 7.4 0 C4.6 4.7 -4.6 4.7 -7.4 0 Z" fill="none" stroke="#dcdcdc" stroke-width="1.7"/><circle r="2.7" fill="#dcdcdc"/><circle cx="-0.3" cy="-0.2" r="1" fill="#535353"/></g>
<circle cx="1865" cy="670.2" r="4.6" fill="none" stroke="#dadada" stroke-width="1.3"/>
<rect x="1652" y="657.1" width="4.6" height="25.1" fill="#b3131b"/>
<rect x="1746.5" y="659.1" width="21" height="21" fill="#fff" stroke="#111" stroke-width="1.3"/>
<circle cx="1757.0" cy="669.6" r="9.4" fill="#000"/>
<rect x="1631" y="708.5" width="266" height="1" fill="#626262"/>
<g transform="translate(1611.8,695.9)"><path d="M-7.4 0 C-4.6 -4.7 4.6 -4.7 7.4 0 C4.6 4.7 -4.6 4.7 -7.4 0 Z" fill="none" stroke="#dcdcdc" stroke-width="1.7"/><circle r="2.7" fill="#dcdcdc"/><circle cx="-0.3" cy="-0.2" r="1" fill="#535353"/></g>
<circle cx="1865" cy="696.5" r="4.6" fill="none" stroke="#dadada" stroke-width="1.3"/>
<rect x="1652" y="683.3" width="4.6" height="25.1" fill="#b3131b"/>
<rect x="1746.5" y="685.3" width="21" height="21" fill="#fff" stroke="#111" stroke-width="1.3"/>
<rect x="1749.5" y="694.7" width="15" height="2.4" rx="1.2" fill="#c4c4c4"/>
<rect x="1631" y="734.8" width="266" height="1" fill="#626262"/>
<g transform="translate(1611.8,722.1)"><path d="M-7.4 0 C-4.6 -4.7 4.6 -4.7 7.4 0 C4.6 4.7 -4.6 4.7 -7.4 0 Z" fill="none" stroke="#dcdcdc" stroke-width="1.7"/><circle r="2.7" fill="#dcdcdc"/><circle cx="-0.3" cy="-0.2" r="1" fill="#535353"/></g>
<circle cx="1865" cy="722.7" r="4.6" fill="none" stroke="#dadada" stroke-width="1.3"/>
<rect x="1652" y="709.6" width="4.6" height="25.1" fill="#b3131b"/>
<rect x="1746.5" y="711.6" width="21" height="21" fill="#fff" stroke="#111" stroke-width="1.3"/>
<circle cx="1757.0" cy="722.1" r="6" fill="#f0f0f0" stroke="#e4e4e4" stroke-width="1"/>
<rect x="1631" y="761.0" width="266" height="1" fill="#626262"/>
<g transform="translate(1611.8,748.4)"><path d="M-7.4 0 C-4.6 -4.7 4.6 -4.7 7.4 0 C4.6 4.7 -4.6 4.7 -7.4 0 Z" fill="none" stroke="#dcdcdc" stroke-width="1.7"/><circle r="2.7" fill="#dcdcdc"/><circle cx="-0.3" cy="-0.2" r="1" fill="#535353"/></g>
<circle cx="1865" cy="749.0" r="4.6" fill="none" stroke="#dadada" stroke-width="1.3"/>
<rect x="1652" y="735.9" width="4.6" height="25.1" fill="#b3131b"/>
<rect x="1746.5" y="737.9" width="21" height="21" fill="#fff" stroke="#111" stroke-width="1.3"/>
<rect x="1747.3" y="741.5" width="19.4" height="12.4" fill="url(#rb2)"/>
<rect x="1631" y="787.3" width="266" height="1" fill="#626262"/>
<rect x="1652" y="762.1" width="4.6" height="25.1" fill="#b3131b"/>
<rect x="1718.5" y="764.14" width="21" height="8" fill="#fff" stroke="#111" stroke-width="1.2"/><path d="M1724.5 769.14 h9 v3 h-9 Z" fill="#111"/>
<path d="M1888 184 H1897.4 V192.6 Z" fill="#e6e6e6"/>
</svg>
<div class="abs serif" style="left:1718px;top:189.0px;font-size:14px;line-height:18px;color:#e4e4e4;letter-spacing:0.8px;white-space:nowrap;font-weight:500">秉影</div>
<div class="abs serif" style="left:1746.5px;top:215.3px;font-size:14px;line-height:18px;color:#e4e4e4;letter-spacing:0.8px;white-space:nowrap;font-weight:500">细节</div>
<div class="abs serif" style="left:1746.5px;top:241.5px;font-size:14px;line-height:18px;color:#e4e4e4;letter-spacing:0.8px;white-space:nowrap;font-weight:500">三指</div>
<div class="abs serif" style="left:1746.5px;top:267.8px;font-size:14px;line-height:18px;color:#e4e4e4;letter-spacing:0.8px;white-space:nowrap;font-weight:500">相机</div>
<div class="abs serif" style="left:1775px;top:294.2px;font-size:14px;line-height:18px;color:#dedede;letter-spacing:4.2px;font-weight:bold">...</div>
<div class="abs serif" style="left:1775px;top:320.4px;font-size:14px;line-height:18px;color:#dedede;letter-spacing:4.2px;font-weight:bold">...</div>
<div class="abs serif" style="left:1775px;top:346.7px;font-size:14px;line-height:18px;color:#dedede;letter-spacing:4.2px;font-weight:bold">...</div>
<div class="abs serif" style="left:1775px;top:373.0px;font-size:14px;line-height:18px;color:#dedede;letter-spacing:4.2px;font-weight:bold">...</div>
<div class="abs serif" style="left:1775px;top:399.3px;font-size:14px;line-height:18px;color:#dedede;letter-spacing:4.2px;font-weight:bold">...</div>
<div class="abs serif" style="left:1775px;top:425.5px;font-size:14px;line-height:18px;color:#dedede;letter-spacing:4.2px;font-weight:bold">...</div>
<div class="abs serif" style="left:1775px;top:451.8px;font-size:14px;line-height:18px;color:#dedede;letter-spacing:4.2px;font-weight:bold">...</div>
<div class="abs serif" style="left:1775px;top:478.1px;font-size:14px;line-height:18px;color:#dedede;letter-spacing:4.2px;font-weight:bold">...</div>
<div class="abs serif" style="left:1775px;top:504.3px;font-size:14px;line-height:18px;color:#dedede;letter-spacing:4.2px;font-weight:bold">...</div>
<div class="abs serif" style="left:1775px;top:530.6px;font-size:14px;line-height:18px;color:#dedede;letter-spacing:4.2px;font-weight:bold">...</div>
<div class="abs serif" style="left:1775px;top:556.9px;font-size:14px;line-height:18px;color:#dedede;letter-spacing:4.2px;font-weight:bold">...</div>
<div class="abs serif" style="left:1775px;top:583.1px;font-size:14px;line-height:18px;color:#dedede;letter-spacing:4.2px;font-weight:bold">...</div>
<div class="abs serif" style="left:1775px;top:609.4px;font-size:14px;line-height:18px;color:#dedede;letter-spacing:4.2px;font-weight:bold">...</div>
<div class="abs serif" style="left:1775px;top:635.7px;font-size:14px;line-height:18px;color:#dedede;letter-spacing:4.2px;font-weight:bold">...</div>
<div class="abs serif" style="left:1775px;top:662.0px;font-size:14px;line-height:18px;color:#dedede;letter-spacing:4.2px;font-weight:bold">...</div>
<div class="abs serif" style="left:1775px;top:688.2px;font-size:14px;line-height:18px;color:#dedede;letter-spacing:4.2px;font-weight:bold">...</div>
<div class="abs serif" style="left:1775px;top:714.5px;font-size:14px;line-height:18px;color:#dedede;letter-spacing:4.2px;font-weight:bold">...</div>
<div class="abs serif" style="left:1775px;top:740.8px;font-size:14px;line-height:18px;color:#dedede;letter-spacing:4.2px;font-weight:bold">...</div>
<div class="abs" style="left:1898px;top:183px;width:13px;height:814px;background:#4a4a4a"></div>
<div class="abs" style="left:1898px;top:197px;width:13px;height:778px;background:#5c5c5c;border-radius:6px"></div>
<svg class="abs" style="left:1899px;top:187px" width="11" height="7" viewBox="0 0 11 7"><path d="M1 5.6 L5.5 1.4 L10 5.6" fill="none" stroke="#b8b8b8" stroke-width="1.5"/></svg>
<svg class="abs" style="left:1899px;top:983px" width="11" height="7" viewBox="0 0 11 7"><path d="M1 1.4 L5.5 5.6 L10 1.4" fill="none" stroke="#b8b8b8" stroke-width="1.5"/></svg>
<!--LAYERSEND-->
<!--LAYERS-->
<!--COLORSTART--><div class="abs" style="left:1585px;top:769px;width:300px;height:244px;background:#535353;box-shadow:0 0 6px rgba(0,0,0,0.35)"></div>
<div class="abs" style="left:1585px;top:769px;width:300px;height:16px;background:#454545;border-radius:3px 3px 0 0"></div>
<div class="abs" style="left:1585px;top:785px;width:300px;height:34px;background:#424242"></div>
<div class="abs" style="left:1640px;top:785px;width:60px;height:35px;background:#535353"></div>
<div class="abs" style="left:1585px;top:769px;width:1px;height:244px;background:#5e5e5e"></div>
<div class="abs" style="left:1884px;top:769px;width:1px;height:244px;background:#484848"></div>
<svg class="abs" style="left:0;top:0" width="1919" height="1013" viewBox="0 0 1919 1013">
<path d="M1851.4 774 L1848.4 777 L1851.4 780 Z M1856.4 774 L1853.4 777 L1856.4 780 Z" fill="#d8d8d8"/>
<path d="M1870 773 L1878 781 M1878 773 L1870 781" stroke="#e2e2e2" stroke-width="2"/>
<path d="M1646.4 800.4 L1649 797.4 L1651.6 800.4 Z M1646.4 803.6 L1649 806.6 L1651.6 803.6 Z" fill="#bdbdbd"/>
<path d="M1863.6 799 H1876.6 M1863.6 803 H1876.6 M1863.6 807 H1876.6" stroke="#cfcfcf" stroke-width="1.5"/>
<rect x="1593.5" y="828" width="43.6" height="43.4" fill="#b8d7ef" stroke="#fff" stroke-width="1.2"/>
<circle cx="1614" cy="887.4" r="8.6" fill="#fff" stroke="#4d6fe0" stroke-width="1.2"/><circle cx="1614" cy="887.4" r="4.8" fill="#b8d7ef" stroke="#5a7ee6" stroke-width="1.2"/>
<defs>
<linearGradient id="gR" x1="0" x2="1"><stop offset="0" stop-color="#00d7ef"/><stop offset="1" stop-color="#ffd7ef"/></linearGradient>
<linearGradient id="gG" x1="0" x2="1"><stop offset="0" stop-color="#b800ef"/><stop offset="1" stop-color="#b8ffef"/></linearGradient>
<linearGradient id="gB" x1="0" x2="1"><stop offset="0" stop-color="#b8d700"/><stop offset="1" stop-color="#b8d7ff"/></linearGradient>
<linearGradient id="spec" x1="0" x2="1"><stop offset="0" stop-color="#ff0000"/><stop offset="0.17" stop-color="#ffff00"/><stop offset="0.33" stop-color="#00ff00"/><stop offset="0.5" stop-color="#00ffff"/><stop offset="0.67" stop-color="#0000ff"/><stop offset="0.83" stop-color="#ff00ff"/><stop offset="1" stop-color="#ff0000"/></linearGradient>
<linearGradient id="specw" x1="0" y1="0" x2="0" y2="1"><stop offset="0" stop-color="#fff" stop-opacity="1"/><stop offset="1" stop-color="#fff" stop-opacity="0"/></linearGradient>
</defs>
<rect x="1674.5" y="839.2" width="127" height="5.4" fill="url(#gR)"/>
<path d="M1761.4 854.0 V850.4 Q1762 847.6 1767 844.4 Q1772 847.6 1772.6 850.4 V854.0 Z" fill="#c9c9c9"/>
<rect x="1674.5" y="880.6" width="127" height="5.4" fill="url(#gG)"/>
<path d="M1776.0 895.4 V891.8 Q1776.6 889.0 1781.6 885.8 Q1786.6 889.0 1787.1999999999998 891.8 V895.4 Z" fill="#c9c9c9"/>
<rect x="1674.5" y="921.8" width="127" height="5.4" fill="url(#gB)"/>
<path d="M1789.4 936.6 V933.0 Q1790 930.2 1795 927.0 Q1800 930.2 1800.6 933.0 V936.6 Z" fill="#c9c9c9"/>
<rect x="1593.4" y="962.4" width="16" height="16" fill="#fff"/><path d="M1594 977.6 L1608.6 963.2" stroke="#ee0f1b" stroke-width="2.4"/><rect x="1609.4" y="962.4" width="16" height="16" fill="#000"/><rect x="1625.4" y="962.4" width="16" height="16" fill="#fff"/>
<rect x="1594.4" y="992.6" width="267.6" height="21" fill="url(#spec)"/><rect x="1594.4" y="992.6" width="267.6" height="15" fill="url(#specw)"/>
<rect x="1792.6" y="978.6" width="7.4" height="1.4" fill="#d0d0d0"/>
</svg>
<div class="abs sans" style="left:1598px;top:790px;font-size:15px;line-height:22px;color:#a6a6a6;letter-spacing:0.4px">色板</div>
<div class="abs sans" style="left:1659px;top:790px;font-size:15px;line-height:22px;color:#f2f2f2;letter-spacing:0.4px">颜色</div>
<div class="abs sans" style="left:1712px;top:790px;font-size:15px;line-height:22px;color:#a6a6a6;letter-spacing:0.2px;white-space:nowrap">颜色参考</div>
<div class="abs serif" style="left:1652px;top:833.0px;font-size:14px;line-height:18px;color:#cfcfcf">R</div>
<div class="abs" style="left:1811px;top:830.0px;width:43px;height:23px;background:#474747;border-radius:3px;border:1px solid #4e4e4e"></div>
<div class="abs" style="left:1817px;top:832.4px;font-family:'Liberation Mono',monospace;font-size:13.4px;line-height:18px;color:#ececec;transform:scaleY(1.12)">184</div>
<div class="abs serif" style="left:1652px;top:874.4px;font-size:14px;line-height:18px;color:#cfcfcf">G</div>
<div class="abs" style="left:1811px;top:871.4px;width:43px;height:23px;background:#474747;border-radius:3px;border:1px solid #4e4e4e"></div>
<div class="abs" style="left:1817px;top:873.8px;font-family:'Liberation Mono',monospace;font-size:13.4px;line-height:18px;color:#ececec;transform:scaleY(1.12)">215</div>
<div class="abs serif" style="left:1652px;top:915.6px;font-size:14px;line-height:18px;color:#cfcfcf">B</div>
<div class="abs" style="left:1811px;top:912.6px;width:43px;height:23px;background:#474747;border-radius:3px;border:1px solid #4e4e4e"></div>
<div class="abs" style="left:1817px;top:915.0px;font-family:'Liberation Mono',monospace;font-size:13.4px;line-height:18px;color:#ececec;transform:scaleY(1.12)">239</div>
<div class="abs serif" style="left:1792px;top:962px;font-size:14px;line-height:18px;color:#d8d8d8">#</div>
<div class="abs" style="left:1807px;top:959.6px;width:56px;height:23px;background:#474747;border-radius:3px;border:1px solid #4e4e4e"></div>
<div class="abs" style="left:1812.4px;top:962px;font-family:'Liberation Mono',monospace;font-size:13.2px;line-height:18px;color:#ececec;letter-spacing:-0.05px;transform:scaleY(1.12)">B8D7EF</div>
<!--COLOREND-->
<!--COLOR-->
</body>
</html>
